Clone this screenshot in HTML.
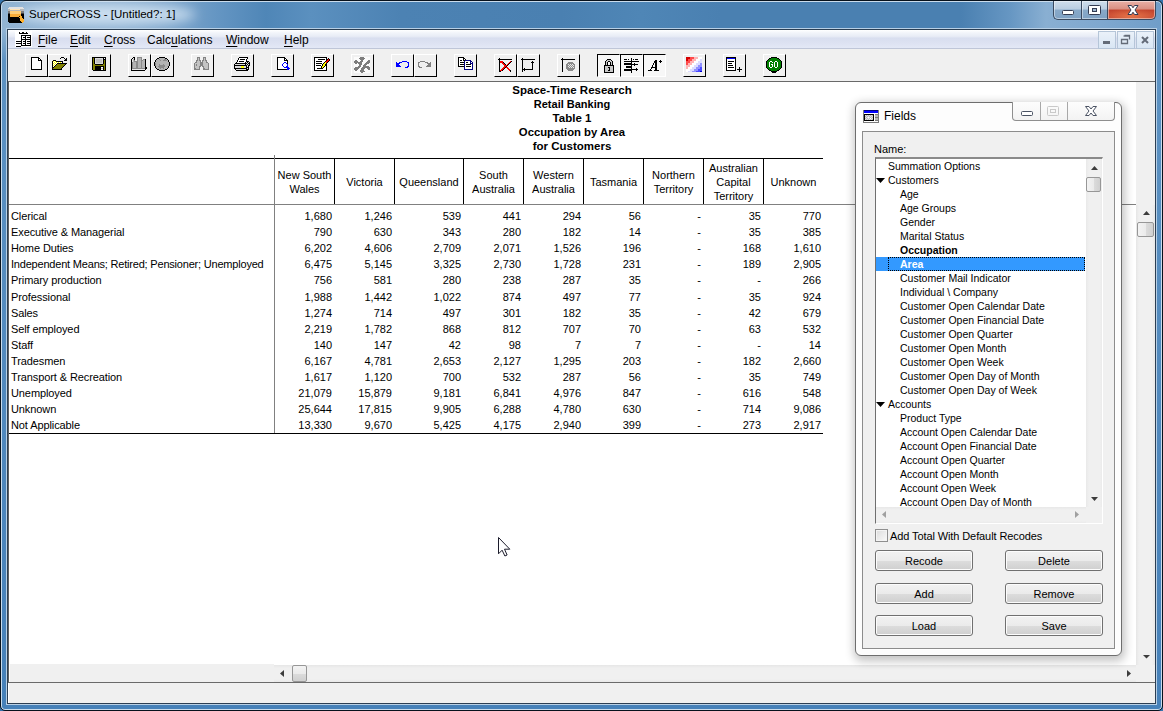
<!DOCTYPE html>
<html><head><meta charset="utf-8">
<style>
*{box-sizing:border-box}
html,body{margin:0;padding:0;width:1163px;height:711px;overflow:hidden;background:#3674ad}
body{position:relative;font-family:"Liberation Sans",sans-serif;font-size:11px;color:#000}
.a{position:absolute}
#frame{left:0;top:0;width:1163px;height:711px;border:1px solid #07111c;border-radius:6px 6px 5px 5px;
 background:linear-gradient(180deg,rgba(0,0,0,0) 0,rgba(0,0,0,0) 28px,#5d92c2 60px,#4681b9 700px),
 linear-gradient(90deg,#92b4d3 0px,#8aaed0 120px,#7ea6cc 170px,#6596c3 215px,#4f86b7 265px,#5b90bf 310px,#4c82b3 400px,#4a80b1 560px,#4f86b6 640px,#4a80b1 720px,#4a80b1 960px,#6797c3 1010px,#89afd2 1045px,#7fa8cf 1100px,#6f9dc8 1163px);
 box-shadow:inset 0 0 0 1px #cadcec}
#glow{left:18px;top:4px;width:178px;height:21px;border-radius:50%;background:rgba(214,230,244,0.85);filter:blur(6px)}
#title{left:29px;top:8px;font-size:11.5px;color:#000;white-space:nowrap}
#client{left:7px;top:29px;width:1149px;height:675px;border:1px solid #2b3e52;background:#f0f0f0;box-shadow:0 0 0 1px #b8d0e6}
#menubar{left:8px;top:30px;width:1147px;height:19px;border-bottom:1px solid #bfc6d8;background:linear-gradient(#ffffff 0,#f1f4fa 3px,#e9edf6 6px,#e4e8f4 7px,#d8deef 8px,#dde2f2 13px,#e3e8f6 18px);}
.mi{top:3px;font-size:12px;white-space:nowrap}
.mi u{text-decoration:underline;text-decoration-thickness:1px;text-underline-offset:2px}
#toolbar{left:8px;top:49px;width:1147px;height:33px;background:#f0f0f0;border-bottom:1px solid #696969}
.tb{position:absolute;top:54px;width:23px;height:23px;border-left:1px solid #fff;border-top:1px solid #fff;border-right:1px solid #000;border-bottom:1px solid #000;background:#f0f0f0}
.tb .ic{position:absolute;left:2px;top:2px}
.tb.pr{border-left-color:#000;border-top-color:#000;border-right-color:#fff;border-bottom-color:#fff;background:#f7f7f7}
.tb.pr .ic{left:3px;top:3px}
#mdi{left:8px;top:82px;width:1147px;height:583px;background:#fff}
.t{position:absolute;white-space:nowrap;font-size:11px;line-height:14px}
.b{font-weight:bold}
.tt{left:372px;width:400px;text-align:center;font-size:11.5px}
.hd{position:absolute;top:159px;height:45px;display:flex;align-items:center;justify-content:center;text-align:center;line-height:14px;font-size:11px}
.cb{top:1px;height:19px;border:1px solid #3a4a60;border-top:none;background:linear-gradient(#cfdeec 0,#b9cde1 45%,#88a9c9 50%,#7fa2c4 100%);box-shadow:inset 0 0 0 1px rgba(255,255,255,0.45)}
.mdib{top:31px;width:18px;height:18px;border:1px solid #b5c5d8;background:linear-gradient(#eaf1f9,#d9e6f4);}
.sb{background:#f0f0f0}
.thumbv{border:1px solid #979797;border-radius:2px;background:linear-gradient(90deg,#f3f3f3 0,#ebebeb 50%,#dcdcdc 51%,#d0d0d0 100%)}
.thumbh{border:1px solid #979797;border-radius:2px;background:linear-gradient(180deg,#f3f3f3 0,#ebebeb 50%,#dcdcdc 51%,#d0d0d0 100%)}
#fw{left:855px;top:102px;width:267px;height:554px;border:1px solid #6e6e6e;border-radius:6px;background:#fdfdfd;box-shadow:1px 3px 10px 2px rgba(0,0,0,0.24)}
.fbtn{position:absolute;width:98px;height:21px;border:1px solid #707070;border-radius:3px;background:linear-gradient(#f2f2f2 0,#ebebeb 50%,#dddddd 51%,#cfcfcf 100%);box-shadow:inset 0 0 0 1px #fcfcfc;font-size:11px;text-align:center;line-height:20px}
.li{position:absolute;left:0;height:14px;line-height:14px;font-size:10.5px;white-space:nowrap}
</style></head><body>
<div id="frame" class="a"></div>
<div id="glow" class="a"></div>
<svg class="a" style="left:8px;top:7px" width="16" height="16" viewBox="0 0 16 16" shape-rendering="crispEdges"><rect x="1" y="0" width="14" height="1" fill="#e2e2e2"/><rect x="0" y="1" width="16" height="1" fill="#e2e2e2"/><rect x="0" y="2" width="2" height="1" fill="#b8b8b8"/><rect x="2" y="2" width="10" height="1" fill="#ffe2b4"/><rect x="12" y="2" width="4" height="1" fill="#b8b8b8"/><rect x="0" y="3" width="16" height="1" fill="#b8b8b8"/><rect x="0" y="4" width="2" height="1" fill="#7c7c7c"/><rect x="2" y="4" width="11" height="1" fill="#ffcf7a"/><rect x="13" y="4" width="3" height="1" fill="#7c7c7c"/><rect x="0" y="5" width="2" height="1" fill="#7c7c7c"/><rect x="2" y="5" width="11" height="1" fill="#ffcf7a"/><rect x="13" y="5" width="3" height="1" fill="#7c7c7c"/><rect x="0" y="6" width="2" height="1" fill="#404040"/><rect x="2" y="6" width="11" height="1" fill="#ffcf7a"/><rect x="13" y="6" width="3" height="1" fill="#404040"/><rect x="0" y="7" width="2" height="1" fill="#000000"/><rect x="2" y="7" width="11" height="1" fill="#f9ad3a"/><rect x="13" y="7" width="3" height="1" fill="#000000"/><rect x="0" y="8" width="2" height="1" fill="#000000"/><rect x="2" y="8" width="9" height="1" fill="#f9ad3a"/><rect x="11" y="8" width="2" height="1" fill="#ffb22e"/><rect x="13" y="8" width="3" height="1" fill="#000000"/><rect x="0" y="9" width="2" height="1" fill="#000000"/><rect x="2" y="9" width="9" height="1" fill="#f9ad3a"/><rect x="11" y="9" width="1" height="1" fill="#000000"/><rect x="12" y="9" width="2" height="1" fill="#ffb22e"/><rect x="14" y="9" width="2" height="1" fill="#000000"/><rect x="0" y="10" width="11" height="1" fill="#000000"/><rect x="11" y="10" width="3" height="1" fill="#ffb22e"/><rect x="14" y="10" width="2" height="1" fill="#000000"/><rect x="0" y="11" width="12" height="1" fill="#000000"/><rect x="12" y="11" width="3" height="1" fill="#ffb22e"/><rect x="15" y="11" width="1" height="1" fill="#000000"/><rect x="0" y="12" width="12" height="1" fill="#000000"/><rect x="12" y="12" width="4" height="1" fill="#ffb22e"/><rect x="0" y="13" width="12" height="1" fill="#000000"/><rect x="12" y="13" width="4" height="1" fill="#ffb22e"/><rect x="0" y="14" width="13" height="1" fill="#000000"/><rect x="13" y="14" width="3" height="1" fill="#ffb22e"/><rect x="1" y="15" width="13" height="1" fill="#000000"/><rect x="14" y="15" width="1" height="1" fill="#ffb22e"/></svg>
<div class="a" id="title">SuperCROSS - [Untitled?: 1]</div>
<!-- caption buttons -->
<div class="a cb" style="left:1053px;width:29px;border-radius:0 0 0 5px;border-right:none"></div>
<div class="a cb" style="left:1081px;width:27px;border-right:none"></div>
<div class="a cb" style="left:1107px;width:49px;border-radius:0 0 5px 0;background:radial-gradient(ellipse 60% 45% at 50% 85%,rgba(255,150,90,0.55),rgba(255,150,90,0) 100%),linear-gradient(#e9b0a6 0,#d98f82 45%,#c2432c 50%,#c84a32 80%,#bf4a36 100%)"></div>
<svg class="a" style="left:1053px;top:0px" width="103" height="20" viewBox="0 0 103 20">
 <rect x="9.5" y="10.5" width="11" height="4" rx="1" fill="#fff" stroke="#343c52"/>
 <rect x="35.5" y="5.5" width="12" height="9" rx="1" fill="#fff" stroke="#343c52"/>
 <rect x="39.5" y="8.5" width="4" height="3" fill="#9fb7cf" stroke="#343c52"/>
 <path d="M75 5.5H78.5L80 7.8L81.5 5.5H85L82 10L85 14.5H81.5L80 12.2L78.5 14.5H75L78 10Z" fill="#fff" stroke="#343c52" stroke-linejoin="round"/>
</svg>
<div id="client" class="a"></div>
<div id="menubar" class="a">
 <div class="a mi" style="left:30px"><u>F</u>ile</div>
 <div class="a mi" style="left:62px"><u>E</u>dit</div>
 <div class="a mi" style="left:96px"><u>C</u>ross</div>
 <div class="a mi" style="left:139px">Calc<u>u</u>lations</div>
 <div class="a mi" style="left:218px"><u>W</u>indow</div>
 <div class="a mi" style="left:276px"><u>H</u>elp</div>
</div>
<div class="a" style="left:15px;top:31px;width:17px;height:16px;background:#fff"></div>
<svg class="a" style="left:16px;top:32px" width="16" height="16" viewBox="0 0 16 16" shape-rendering="crispEdges"><rect x="3" y="0" width="1" height="1" fill="#000000"/><rect x="6" y="0" width="2" height="1" fill="#000000"/><rect x="10" y="0" width="1" height="1" fill="#000000"/><rect x="3" y="1" width="9" height="1" fill="#000000"/><rect x="5" y="3" width="10" height="1" fill="#000000"/><rect x="5" y="4" width="1" height="1" fill="#000000"/><rect x="6" y="4" width="3" height="1" fill="#ffffff"/><rect x="9" y="4" width="1" height="1" fill="#000000"/><rect x="10" y="4" width="4" height="1" fill="#ffffff"/><rect x="14" y="4" width="1" height="1" fill="#000000"/><rect x="5" y="5" width="1" height="1" fill="#000000"/><rect x="6" y="5" width="1" height="1" fill="#ffffff"/><rect x="7" y="5" width="3" height="1" fill="#000000"/><rect x="10" y="5" width="1" height="1" fill="#ffffff"/><rect x="11" y="5" width="4" height="1" fill="#000000"/><rect x="5" y="6" width="1" height="1" fill="#000000"/><rect x="6" y="6" width="3" height="1" fill="#ffffff"/><rect x="9" y="6" width="1" height="1" fill="#000000"/><rect x="10" y="6" width="4" height="1" fill="#ffffff"/><rect x="14" y="6" width="1" height="1" fill="#000000"/><rect x="5" y="7" width="10" height="1" fill="#000000"/><rect x="5" y="8" width="1" height="1" fill="#000000"/><rect x="6" y="8" width="3" height="1" fill="#ffffff"/><rect x="9" y="8" width="1" height="1" fill="#000000"/><rect x="10" y="8" width="4" height="1" fill="#ffffff"/><rect x="14" y="8" width="1" height="1" fill="#000000"/><rect x="0" y="9" width="6" height="1" fill="#000000"/><rect x="6" y="9" width="1" height="1" fill="#ffffff"/><rect x="7" y="9" width="3" height="1" fill="#000000"/><rect x="10" y="9" width="1" height="1" fill="#ffffff"/><rect x="11" y="9" width="4" height="1" fill="#000000"/><rect x="5" y="10" width="1" height="1" fill="#000000"/><rect x="6" y="10" width="3" height="1" fill="#ffffff"/><rect x="9" y="10" width="1" height="1" fill="#000000"/><rect x="10" y="10" width="4" height="1" fill="#ffffff"/><rect x="14" y="10" width="1" height="1" fill="#000000"/><rect x="0" y="11" width="6" height="1" fill="#000000"/><rect x="6" y="11" width="1" height="1" fill="#ffffff"/><rect x="7" y="11" width="3" height="1" fill="#000000"/><rect x="10" y="11" width="1" height="1" fill="#ffffff"/><rect x="11" y="11" width="4" height="1" fill="#000000"/><rect x="5" y="12" width="1" height="1" fill="#000000"/><rect x="6" y="12" width="3" height="1" fill="#ffffff"/><rect x="9" y="12" width="1" height="1" fill="#000000"/><rect x="10" y="12" width="4" height="1" fill="#ffffff"/><rect x="14" y="12" width="1" height="1" fill="#000000"/><rect x="5" y="13" width="10" height="1" fill="#000000"/><rect x="0" y="14" width="5" height="1" fill="#000000"/></svg>
<div class="a mdib" style="left:1098px"></div>
<div class="a mdib" style="left:1117px"></div>
<div class="a mdib" style="left:1136px"></div>
<svg class="a" style="left:1098px;top:31px" width="57" height="18" viewBox="0 0 57 18">
 <rect x="5" y="10" width="7" height="3" fill="#636b78"/>
 <path d="M26.5 4.5H31.5V8.5M23.5 8.5H29.5V12.5H23.5Z" fill="none" stroke="#636b78" stroke-width="1.3"/>
 <path d="M25.5 5H31.5" stroke="#636b78" stroke-width="1.3"/>
 <path d="M44 6L50 12M50 6L44 12" stroke="#636b78" stroke-width="2"/>
</svg>
<div id="toolbar" class="a"></div>
<div id="mdi" class="a"></div>
<div class="tb" style="left:25px"></div>
<div class="tb" style="left:48px"></div>
<div class="tb" style="left:88px"></div>
<div class="tb" style="left:128px"></div>
<div class="tb" style="left:151px"></div>
<div class="tb" style="left:191px"></div>
<div class="tb" style="left:231px"></div>
<div class="tb" style="left:271px"></div>
<div class="tb" style="left:311px"></div>
<div class="tb" style="left:351px"></div>
<div class="tb" style="left:391px"></div>
<div class="tb" style="left:414px"></div>
<div class="tb" style="left:454px"></div>
<div class="tb" style="left:494px"></div>
<div class="tb" style="left:517px"></div>
<div class="tb" style="left:557px"></div>
<div class="tb pr" style="left:597px"></div>
<div class="tb pr" style="left:620px"></div>
<div class="tb pr" style="left:643px"></div>
<div class="tb" style="left:683px"></div>
<div class="tb" style="left:723px"></div>
<div class="tb" style="left:763px"></div>
<svg class="a" style="left:28px;top:57px" width="17" height="17" viewBox="0 0 17 17" shape-rendering="crispEdges"><rect x="3" y="0" width="8" height="1" fill="#000000"/><rect x="3" y="1" width="1" height="1" fill="#000000"/><rect x="4" y="1" width="6" height="1" fill="#ffffff"/><rect x="10" y="1" width="2" height="1" fill="#000000"/><rect x="3" y="2" width="1" height="1" fill="#000000"/><rect x="4" y="2" width="6" height="1" fill="#ffffff"/><rect x="10" y="2" width="1" height="1" fill="#000000"/><rect x="11" y="2" width="1" height="1" fill="#ffffff"/><rect x="12" y="2" width="1" height="1" fill="#000000"/><rect x="3" y="3" width="1" height="1" fill="#000000"/><rect x="4" y="3" width="6" height="1" fill="#ffffff"/><rect x="10" y="3" width="4" height="1" fill="#000000"/><rect x="3" y="4" width="1" height="1" fill="#000000"/><rect x="4" y="4" width="9" height="1" fill="#ffffff"/><rect x="13" y="4" width="1" height="1" fill="#000000"/><rect x="3" y="5" width="1" height="1" fill="#000000"/><rect x="4" y="5" width="9" height="1" fill="#ffffff"/><rect x="13" y="5" width="1" height="1" fill="#000000"/><rect x="3" y="6" width="1" height="1" fill="#000000"/><rect x="4" y="6" width="9" height="1" fill="#ffffff"/><rect x="13" y="6" width="1" height="1" fill="#000000"/><rect x="3" y="7" width="1" height="1" fill="#000000"/><rect x="4" y="7" width="9" height="1" fill="#ffffff"/><rect x="13" y="7" width="1" height="1" fill="#000000"/><rect x="3" y="8" width="1" height="1" fill="#000000"/><rect x="4" y="8" width="9" height="1" fill="#ffffff"/><rect x="13" y="8" width="1" height="1" fill="#000000"/><rect x="3" y="9" width="1" height="1" fill="#000000"/><rect x="4" y="9" width="9" height="1" fill="#ffffff"/><rect x="13" y="9" width="1" height="1" fill="#000000"/><rect x="3" y="10" width="1" height="1" fill="#000000"/><rect x="4" y="10" width="9" height="1" fill="#ffffff"/><rect x="13" y="10" width="1" height="1" fill="#000000"/><rect x="3" y="11" width="1" height="1" fill="#000000"/><rect x="4" y="11" width="9" height="1" fill="#ffffff"/><rect x="13" y="11" width="1" height="1" fill="#000000"/><rect x="3" y="12" width="11" height="1" fill="#000000"/></svg>
<svg class="a" style="left:51px;top:57px" width="17" height="17" viewBox="0 0 17 17" shape-rendering="crispEdges"><rect x="10" y="0" width="3" height="1" fill="#000000"/><rect x="9" y="1" width="1" height="1" fill="#000000"/><rect x="13" y="1" width="1" height="1" fill="#000000"/><rect x="15" y="1" width="1" height="1" fill="#000000"/><rect x="14" y="2" width="2" height="1" fill="#000000"/><rect x="2" y="3" width="3" height="1" fill="#000000"/><rect x="13" y="3" width="3" height="1" fill="#000000"/><rect x="1" y="4" width="1" height="1" fill="#000000"/><rect x="2" y="4" width="1" height="1" fill="#ffff00"/><rect x="3" y="4" width="1" height="1" fill="#ffffff"/><rect x="4" y="4" width="1" height="1" fill="#ffff00"/><rect x="5" y="4" width="7" height="1" fill="#000000"/><rect x="1" y="5" width="1" height="1" fill="#000000"/><rect x="2" y="5" width="1" height="1" fill="#ffffff"/><rect x="3" y="5" width="1" height="1" fill="#ffff00"/><rect x="4" y="5" width="1" height="1" fill="#ffffff"/><rect x="5" y="5" width="1" height="1" fill="#ffff00"/><rect x="6" y="5" width="1" height="1" fill="#ffffff"/><rect x="7" y="5" width="1" height="1" fill="#ffff00"/><rect x="8" y="5" width="1" height="1" fill="#ffffff"/><rect x="9" y="5" width="1" height="1" fill="#ffff00"/><rect x="10" y="5" width="1" height="1" fill="#ffffff"/><rect x="11" y="5" width="1" height="1" fill="#000000"/><rect x="1" y="6" width="1" height="1" fill="#000000"/><rect x="2" y="6" width="1" height="1" fill="#ffff00"/><rect x="3" y="6" width="1" height="1" fill="#ffffff"/><rect x="4" y="6" width="1" height="1" fill="#ffff00"/><rect x="5" y="6" width="1" height="1" fill="#ffffff"/><rect x="6" y="6" width="10" height="1" fill="#000000"/><rect x="1" y="7" width="1" height="1" fill="#000000"/><rect x="2" y="7" width="1" height="1" fill="#ffffff"/><rect x="3" y="7" width="1" height="1" fill="#ffff00"/><rect x="4" y="7" width="1" height="1" fill="#ffffff"/><rect x="5" y="7" width="1" height="1" fill="#000000"/><rect x="6" y="7" width="8" height="1" fill="#808000"/><rect x="14" y="7" width="1" height="1" fill="#000000"/><rect x="1" y="8" width="1" height="1" fill="#000000"/><rect x="2" y="8" width="1" height="1" fill="#ffff00"/><rect x="3" y="8" width="1" height="1" fill="#ffffff"/><rect x="4" y="8" width="1" height="1" fill="#000000"/><rect x="5" y="8" width="8" height="1" fill="#808000"/><rect x="13" y="8" width="1" height="1" fill="#000000"/><rect x="1" y="9" width="1" height="1" fill="#000000"/><rect x="2" y="9" width="1" height="1" fill="#ffffff"/><rect x="3" y="9" width="1" height="1" fill="#000000"/><rect x="4" y="9" width="8" height="1" fill="#808000"/><rect x="12" y="9" width="1" height="1" fill="#000000"/><rect x="1" y="10" width="2" height="1" fill="#000000"/><rect x="3" y="10" width="8" height="1" fill="#808000"/><rect x="11" y="10" width="1" height="1" fill="#000000"/><rect x="1" y="11" width="1" height="1" fill="#000000"/><rect x="2" y="11" width="8" height="1" fill="#808000"/><rect x="10" y="11" width="1" height="1" fill="#000000"/><rect x="1" y="12" width="10" height="1" fill="#000000"/></svg>
<svg class="a" style="left:91px;top:57px" width="17" height="17" viewBox="0 0 17 17" shape-rendering="crispEdges"><rect x="1" y="0" width="14" height="1" fill="#000000"/><rect x="1" y="1" width="1" height="1" fill="#000000"/><rect x="2" y="1" width="1" height="1" fill="#808000"/><rect x="3" y="1" width="1" height="1" fill="#000000"/><rect x="4" y="1" width="8" height="1" fill="#dcdcdc"/><rect x="12" y="1" width="1" height="1" fill="#000000"/><rect x="13" y="1" width="1" height="1" fill="#ffffff"/><rect x="14" y="1" width="1" height="1" fill="#000000"/><rect x="1" y="2" width="1" height="1" fill="#000000"/><rect x="2" y="2" width="1" height="1" fill="#808000"/><rect x="3" y="2" width="1" height="1" fill="#000000"/><rect x="4" y="2" width="1" height="1" fill="#dcdcdc"/><rect x="5" y="2" width="6" height="1" fill="#c0c0c0"/><rect x="11" y="2" width="1" height="1" fill="#dcdcdc"/><rect x="12" y="2" width="3" height="1" fill="#000000"/><rect x="1" y="3" width="1" height="1" fill="#000000"/><rect x="2" y="3" width="1" height="1" fill="#808000"/><rect x="3" y="3" width="1" height="1" fill="#000000"/><rect x="4" y="3" width="1" height="1" fill="#dcdcdc"/><rect x="5" y="3" width="6" height="1" fill="#c0c0c0"/><rect x="11" y="3" width="1" height="1" fill="#dcdcdc"/><rect x="12" y="3" width="1" height="1" fill="#000000"/><rect x="13" y="3" width="1" height="1" fill="#808000"/><rect x="14" y="3" width="1" height="1" fill="#000000"/><rect x="1" y="4" width="1" height="1" fill="#000000"/><rect x="2" y="4" width="1" height="1" fill="#808000"/><rect x="3" y="4" width="1" height="1" fill="#000000"/><rect x="4" y="4" width="1" height="1" fill="#dcdcdc"/><rect x="5" y="4" width="6" height="1" fill="#c0c0c0"/><rect x="11" y="4" width="1" height="1" fill="#dcdcdc"/><rect x="12" y="4" width="1" height="1" fill="#000000"/><rect x="13" y="4" width="1" height="1" fill="#808000"/><rect x="14" y="4" width="1" height="1" fill="#000000"/><rect x="1" y="5" width="1" height="1" fill="#000000"/><rect x="2" y="5" width="1" height="1" fill="#808000"/><rect x="3" y="5" width="1" height="1" fill="#000000"/><rect x="4" y="5" width="1" height="1" fill="#dcdcdc"/><rect x="5" y="5" width="6" height="1" fill="#c0c0c0"/><rect x="11" y="5" width="1" height="1" fill="#dcdcdc"/><rect x="12" y="5" width="1" height="1" fill="#000000"/><rect x="13" y="5" width="1" height="1" fill="#808000"/><rect x="14" y="5" width="1" height="1" fill="#000000"/><rect x="1" y="6" width="1" height="1" fill="#000000"/><rect x="2" y="6" width="1" height="1" fill="#808000"/><rect x="3" y="6" width="1" height="1" fill="#000000"/><rect x="4" y="6" width="8" height="1" fill="#dcdcdc"/><rect x="12" y="6" width="1" height="1" fill="#000000"/><rect x="13" y="6" width="1" height="1" fill="#808000"/><rect x="14" y="6" width="1" height="1" fill="#000000"/><rect x="1" y="7" width="1" height="1" fill="#000000"/><rect x="2" y="7" width="2" height="1" fill="#808000"/><rect x="4" y="7" width="8" height="1" fill="#000000"/><rect x="12" y="7" width="2" height="1" fill="#808000"/><rect x="14" y="7" width="1" height="1" fill="#000000"/><rect x="1" y="8" width="1" height="1" fill="#000000"/><rect x="2" y="8" width="12" height="1" fill="#808000"/><rect x="14" y="8" width="1" height="1" fill="#000000"/><rect x="1" y="9" width="1" height="1" fill="#000000"/><rect x="2" y="9" width="2" height="1" fill="#808000"/><rect x="4" y="9" width="9" height="1" fill="#000000"/><rect x="13" y="9" width="1" height="1" fill="#808000"/><rect x="14" y="9" width="1" height="1" fill="#000000"/><rect x="1" y="10" width="1" height="1" fill="#000000"/><rect x="2" y="10" width="2" height="1" fill="#808000"/><rect x="4" y="10" width="6" height="1" fill="#000000"/><rect x="10" y="10" width="2" height="1" fill="#ffffff"/><rect x="12" y="10" width="1" height="1" fill="#000000"/><rect x="13" y="10" width="1" height="1" fill="#808000"/><rect x="14" y="10" width="1" height="1" fill="#000000"/><rect x="1" y="11" width="1" height="1" fill="#000000"/><rect x="2" y="11" width="2" height="1" fill="#808000"/><rect x="4" y="11" width="6" height="1" fill="#000000"/><rect x="10" y="11" width="2" height="1" fill="#c0c0c0"/><rect x="12" y="11" width="1" height="1" fill="#000000"/><rect x="13" y="11" width="1" height="1" fill="#808000"/><rect x="14" y="11" width="1" height="1" fill="#000000"/><rect x="1" y="12" width="1" height="1" fill="#000000"/><rect x="2" y="12" width="2" height="1" fill="#808000"/><rect x="4" y="12" width="6" height="1" fill="#000000"/><rect x="10" y="12" width="2" height="1" fill="#ffffff"/><rect x="12" y="12" width="1" height="1" fill="#000000"/><rect x="13" y="12" width="1" height="1" fill="#808000"/><rect x="14" y="12" width="1" height="1" fill="#000000"/><rect x="2" y="13" width="13" height="1" fill="#000000"/></svg>
<svg class="a" style="left:131px;top:57px" width="17" height="17" viewBox="0 0 17 17" shape-rendering="crispEdges"><rect x="2" y="0" width="2" height="1" fill="#000000"/><rect x="6" y="0" width="5" height="1" fill="#8a8a8a"/><rect x="1" y="1" width="1" height="1" fill="#000000"/><rect x="2" y="1" width="1" height="1" fill="#e8e8e8"/><rect x="3" y="1" width="1" height="1" fill="#000000"/><rect x="6" y="1" width="1" height="1" fill="#8a8a8a"/><rect x="7" y="1" width="3" height="1" fill="#b4b4b4"/><rect x="10" y="1" width="1" height="1" fill="#8a8a8a"/><rect x="0" y="2" width="1" height="1" fill="#000000"/><rect x="1" y="2" width="1" height="1" fill="#e8e8e8"/><rect x="2" y="2" width="1" height="1" fill="#b4b4b4"/><rect x="3" y="2" width="1" height="1" fill="#000000"/><rect x="6" y="2" width="1" height="1" fill="#8a8a8a"/><rect x="7" y="2" width="3" height="1" fill="#b4b4b4"/><rect x="10" y="2" width="1" height="1" fill="#8a8a8a"/><rect x="12" y="2" width="2" height="1" fill="#8a8a8a"/><rect x="14" y="2" width="1" height="1" fill="#000000"/><rect x="0" y="3" width="1" height="1" fill="#000000"/><rect x="1" y="3" width="1" height="1" fill="#e8e8e8"/><rect x="2" y="3" width="1" height="1" fill="#b4b4b4"/><rect x="3" y="3" width="1" height="1" fill="#8a8a8a"/><rect x="6" y="3" width="1" height="1" fill="#8a8a8a"/><rect x="7" y="3" width="3" height="1" fill="#b4b4b4"/><rect x="10" y="3" width="2" height="1" fill="#8a8a8a"/><rect x="12" y="3" width="2" height="1" fill="#b4b4b4"/><rect x="14" y="3" width="1" height="1" fill="#000000"/><rect x="0" y="4" width="1" height="1" fill="#000000"/><rect x="1" y="4" width="1" height="1" fill="#e8e8e8"/><rect x="2" y="4" width="1" height="1" fill="#b4b4b4"/><rect x="3" y="4" width="4" height="1" fill="#8a8a8a"/><rect x="7" y="4" width="3" height="1" fill="#b4b4b4"/><rect x="10" y="4" width="1" height="1" fill="#8a8a8a"/><rect x="11" y="4" width="3" height="1" fill="#b4b4b4"/><rect x="14" y="4" width="1" height="1" fill="#000000"/><rect x="0" y="5" width="1" height="1" fill="#000000"/><rect x="1" y="5" width="1" height="1" fill="#8a8a8a"/><rect x="2" y="5" width="3" height="1" fill="#b4b4b4"/><rect x="5" y="5" width="2" height="1" fill="#8a8a8a"/><rect x="7" y="5" width="3" height="1" fill="#b4b4b4"/><rect x="10" y="5" width="1" height="1" fill="#8a8a8a"/><rect x="11" y="5" width="3" height="1" fill="#b4b4b4"/><rect x="14" y="5" width="1" height="1" fill="#000000"/><rect x="0" y="6" width="1" height="1" fill="#000000"/><rect x="1" y="6" width="1" height="1" fill="#8a8a8a"/><rect x="2" y="6" width="3" height="1" fill="#b4b4b4"/><rect x="5" y="6" width="2" height="1" fill="#8a8a8a"/><rect x="7" y="6" width="3" height="1" fill="#b4b4b4"/><rect x="10" y="6" width="1" height="1" fill="#8a8a8a"/><rect x="11" y="6" width="3" height="1" fill="#b4b4b4"/><rect x="14" y="6" width="1" height="1" fill="#000000"/><rect x="0" y="7" width="1" height="1" fill="#000000"/><rect x="1" y="7" width="1" height="1" fill="#8a8a8a"/><rect x="2" y="7" width="3" height="1" fill="#b4b4b4"/><rect x="5" y="7" width="2" height="1" fill="#8a8a8a"/><rect x="7" y="7" width="3" height="1" fill="#b4b4b4"/><rect x="10" y="7" width="1" height="1" fill="#8a8a8a"/><rect x="11" y="7" width="3" height="1" fill="#b4b4b4"/><rect x="14" y="7" width="1" height="1" fill="#000000"/><rect x="0" y="8" width="1" height="1" fill="#000000"/><rect x="1" y="8" width="1" height="1" fill="#8a8a8a"/><rect x="2" y="8" width="3" height="1" fill="#b4b4b4"/><rect x="5" y="8" width="2" height="1" fill="#8a8a8a"/><rect x="7" y="8" width="3" height="1" fill="#b4b4b4"/><rect x="10" y="8" width="1" height="1" fill="#8a8a8a"/><rect x="11" y="8" width="3" height="1" fill="#b4b4b4"/><rect x="14" y="8" width="1" height="1" fill="#000000"/><rect x="0" y="9" width="1" height="1" fill="#000000"/><rect x="1" y="9" width="1" height="1" fill="#8a8a8a"/><rect x="2" y="9" width="3" height="1" fill="#b4b4b4"/><rect x="5" y="9" width="2" height="1" fill="#8a8a8a"/><rect x="7" y="9" width="3" height="1" fill="#b4b4b4"/><rect x="10" y="9" width="1" height="1" fill="#8a8a8a"/><rect x="11" y="9" width="3" height="1" fill="#b4b4b4"/><rect x="14" y="9" width="1" height="1" fill="#000000"/><rect x="0" y="10" width="1" height="1" fill="#000000"/><rect x="1" y="10" width="1" height="1" fill="#8a8a8a"/><rect x="2" y="10" width="3" height="1" fill="#b4b4b4"/><rect x="5" y="10" width="2" height="1" fill="#8a8a8a"/><rect x="7" y="10" width="3" height="1" fill="#b4b4b4"/><rect x="10" y="10" width="1" height="1" fill="#8a8a8a"/><rect x="11" y="10" width="3" height="1" fill="#b4b4b4"/><rect x="14" y="10" width="2" height="1" fill="#000000"/><rect x="0" y="11" width="1" height="1" fill="#000000"/><rect x="1" y="11" width="13" height="1" fill="#8a8a8a"/><rect x="14" y="11" width="2" height="1" fill="#000000"/><rect x="0" y="12" width="1" height="1" fill="#000000"/><rect x="1" y="12" width="13" height="1" fill="#e8e8e8"/><rect x="14" y="12" width="1" height="1" fill="#000000"/><rect x="0" y="13" width="14" height="1" fill="#000000"/></svg>
<svg class="a" style="left:154px;top:57px" width="17" height="17" viewBox="0 0 17 17" shape-rendering="crispEdges"><rect x="5" y="0" width="6" height="1" fill="#000000"/><rect x="3" y="1" width="2" height="1" fill="#000000"/><rect x="5" y="1" width="6" height="1" fill="#b4b4b4"/><rect x="11" y="1" width="2" height="1" fill="#000000"/><rect x="2" y="2" width="1" height="1" fill="#000000"/><rect x="3" y="2" width="2" height="1" fill="#b4b4b4"/><rect x="5" y="2" width="1" height="1" fill="#8a8a8a"/><rect x="6" y="2" width="4" height="1" fill="#b4b4b4"/><rect x="10" y="2" width="2" height="1" fill="#8a8a8a"/><rect x="12" y="2" width="1" height="1" fill="#b4b4b4"/><rect x="13" y="2" width="1" height="1" fill="#000000"/><rect x="1" y="3" width="1" height="1" fill="#000000"/><rect x="2" y="3" width="4" height="1" fill="#b4b4b4"/><rect x="6" y="3" width="1" height="1" fill="#8a8a8a"/><rect x="7" y="3" width="2" height="1" fill="#b4b4b4"/><rect x="9" y="3" width="4" height="1" fill="#8a8a8a"/><rect x="13" y="3" width="1" height="1" fill="#b4b4b4"/><rect x="14" y="3" width="1" height="1" fill="#000000"/><rect x="1" y="4" width="1" height="1" fill="#000000"/><rect x="2" y="4" width="12" height="1" fill="#b4b4b4"/><rect x="14" y="4" width="1" height="1" fill="#000000"/><rect x="0" y="5" width="1" height="1" fill="#000000"/><rect x="1" y="5" width="14" height="1" fill="#b4b4b4"/><rect x="15" y="5" width="1" height="1" fill="#000000"/><rect x="0" y="6" width="1" height="1" fill="#000000"/><rect x="1" y="6" width="1" height="1" fill="#8a8a8a"/><rect x="2" y="6" width="13" height="1" fill="#b4b4b4"/><rect x="15" y="6" width="1" height="1" fill="#000000"/><rect x="0" y="7" width="1" height="1" fill="#000000"/><rect x="1" y="7" width="1" height="1" fill="#8a8a8a"/><rect x="2" y="7" width="3" height="1" fill="#b4b4b4"/><rect x="5" y="7" width="1" height="1" fill="#8a8a8a"/><rect x="6" y="7" width="3" height="1" fill="#b4b4b4"/><rect x="9" y="7" width="1" height="1" fill="#8a8a8a"/><rect x="10" y="7" width="5" height="1" fill="#b4b4b4"/><rect x="15" y="7" width="1" height="1" fill="#000000"/><rect x="0" y="8" width="1" height="1" fill="#000000"/><rect x="1" y="8" width="1" height="1" fill="#8a8a8a"/><rect x="2" y="8" width="3" height="1" fill="#b4b4b4"/><rect x="5" y="8" width="6" height="1" fill="#8a8a8a"/><rect x="11" y="8" width="4" height="1" fill="#b4b4b4"/><rect x="15" y="8" width="1" height="1" fill="#000000"/><rect x="1" y="9" width="1" height="1" fill="#000000"/><rect x="2" y="9" width="2" height="1" fill="#b4b4b4"/><rect x="4" y="9" width="7" height="1" fill="#8a8a8a"/><rect x="11" y="9" width="3" height="1" fill="#b4b4b4"/><rect x="14" y="9" width="1" height="1" fill="#000000"/><rect x="1" y="10" width="1" height="1" fill="#000000"/><rect x="2" y="10" width="3" height="1" fill="#b4b4b4"/><rect x="5" y="10" width="5" height="1" fill="#8a8a8a"/><rect x="10" y="10" width="4" height="1" fill="#b4b4b4"/><rect x="14" y="10" width="1" height="1" fill="#000000"/><rect x="2" y="11" width="1" height="1" fill="#000000"/><rect x="3" y="11" width="3" height="1" fill="#b4b4b4"/><rect x="6" y="11" width="1" height="1" fill="#8a8a8a"/><rect x="7" y="11" width="2" height="1" fill="#b4b4b4"/><rect x="9" y="11" width="1" height="1" fill="#8a8a8a"/><rect x="10" y="11" width="3" height="1" fill="#b4b4b4"/><rect x="13" y="11" width="1" height="1" fill="#000000"/><rect x="3" y="12" width="2" height="1" fill="#000000"/><rect x="5" y="12" width="6" height="1" fill="#b4b4b4"/><rect x="11" y="12" width="2" height="1" fill="#000000"/><rect x="5" y="13" width="6" height="1" fill="#000000"/></svg>
<svg class="a" style="left:194px;top:57px" width="17" height="17" viewBox="0 0 17 17" shape-rendering="crispEdges"><rect x="3" y="0" width="3" height="1" fill="#848484"/><rect x="9" y="0" width="3" height="1" fill="#848484"/><rect x="3" y="1" width="1" height="1" fill="#848484"/><rect x="4" y="1" width="1" height="1" fill="#c4c4c4"/><rect x="5" y="1" width="1" height="1" fill="#848484"/><rect x="9" y="1" width="1" height="1" fill="#848484"/><rect x="10" y="1" width="1" height="1" fill="#c4c4c4"/><rect x="11" y="1" width="1" height="1" fill="#848484"/><rect x="3" y="2" width="1" height="1" fill="#848484"/><rect x="4" y="2" width="1" height="1" fill="#c4c4c4"/><rect x="5" y="2" width="1" height="1" fill="#848484"/><rect x="9" y="2" width="1" height="1" fill="#848484"/><rect x="10" y="2" width="1" height="1" fill="#c4c4c4"/><rect x="11" y="2" width="1" height="1" fill="#848484"/><rect x="2" y="3" width="2" height="1" fill="#848484"/><rect x="4" y="3" width="1" height="1" fill="#c4c4c4"/><rect x="5" y="3" width="2" height="1" fill="#848484"/><rect x="8" y="3" width="2" height="1" fill="#848484"/><rect x="10" y="3" width="1" height="1" fill="#c4c4c4"/><rect x="11" y="3" width="2" height="1" fill="#848484"/><rect x="2" y="4" width="1" height="1" fill="#848484"/><rect x="3" y="4" width="3" height="1" fill="#c4c4c4"/><rect x="6" y="4" width="1" height="1" fill="#848484"/><rect x="8" y="4" width="1" height="1" fill="#848484"/><rect x="9" y="4" width="3" height="1" fill="#c4c4c4"/><rect x="12" y="4" width="1" height="1" fill="#848484"/><rect x="1" y="5" width="2" height="1" fill="#848484"/><rect x="3" y="5" width="3" height="1" fill="#c4c4c4"/><rect x="6" y="5" width="3" height="1" fill="#848484"/><rect x="9" y="5" width="3" height="1" fill="#c4c4c4"/><rect x="12" y="5" width="2" height="1" fill="#848484"/><rect x="0" y="6" width="1" height="1" fill="#848484"/><rect x="1" y="6" width="5" height="1" fill="#c4c4c4"/><rect x="6" y="6" width="3" height="1" fill="#848484"/><rect x="9" y="6" width="5" height="1" fill="#c4c4c4"/><rect x="14" y="6" width="1" height="1" fill="#848484"/><rect x="0" y="7" width="1" height="1" fill="#848484"/><rect x="1" y="7" width="1" height="1" fill="#c4c4c4"/><rect x="2" y="7" width="1" height="1" fill="#848484"/><rect x="3" y="7" width="3" height="1" fill="#c4c4c4"/><rect x="6" y="7" width="3" height="1" fill="#848484"/><rect x="9" y="7" width="5" height="1" fill="#c4c4c4"/><rect x="14" y="7" width="1" height="1" fill="#848484"/><rect x="0" y="8" width="1" height="1" fill="#848484"/><rect x="1" y="8" width="1" height="1" fill="#c4c4c4"/><rect x="2" y="8" width="1" height="1" fill="#848484"/><rect x="3" y="8" width="3" height="1" fill="#c4c4c4"/><rect x="6" y="8" width="3" height="1" fill="#848484"/><rect x="9" y="8" width="5" height="1" fill="#c4c4c4"/><rect x="14" y="8" width="1" height="1" fill="#848484"/><rect x="0" y="9" width="1" height="1" fill="#848484"/><rect x="1" y="9" width="4" height="1" fill="#c4c4c4"/><rect x="5" y="9" width="2" height="1" fill="#848484"/><rect x="8" y="9" width="2" height="1" fill="#848484"/><rect x="10" y="9" width="4" height="1" fill="#c4c4c4"/><rect x="14" y="9" width="1" height="1" fill="#848484"/><rect x="0" y="10" width="1" height="1" fill="#848484"/><rect x="1" y="10" width="4" height="1" fill="#c4c4c4"/><rect x="5" y="10" width="1" height="1" fill="#848484"/><rect x="9" y="10" width="1" height="1" fill="#848484"/><rect x="10" y="10" width="4" height="1" fill="#c4c4c4"/><rect x="14" y="10" width="1" height="1" fill="#848484"/><rect x="0" y="11" width="2" height="1" fill="#848484"/><rect x="2" y="11" width="3" height="1" fill="#c4c4c4"/><rect x="5" y="11" width="1" height="1" fill="#848484"/><rect x="9" y="11" width="2" height="1" fill="#848484"/><rect x="11" y="11" width="3" height="1" fill="#c4c4c4"/><rect x="14" y="11" width="1" height="1" fill="#848484"/><rect x="0" y="12" width="6" height="1" fill="#848484"/><rect x="9" y="12" width="6" height="1" fill="#848484"/></svg>
<svg class="a" style="left:234px;top:57px" width="17" height="17" viewBox="0 0 17 17" shape-rendering="crispEdges"><rect x="5" y="0" width="9" height="1" fill="#000000"/><rect x="4" y="1" width="1" height="1" fill="#000000"/><rect x="5" y="1" width="8" height="1" fill="#ffffff"/><rect x="13" y="1" width="1" height="1" fill="#000000"/><rect x="4" y="2" width="1" height="1" fill="#000000"/><rect x="5" y="2" width="1" height="1" fill="#ffffff"/><rect x="6" y="2" width="5" height="1" fill="#000000"/><rect x="11" y="2" width="1" height="1" fill="#ffffff"/><rect x="12" y="2" width="1" height="1" fill="#000000"/><rect x="3" y="3" width="1" height="1" fill="#000000"/><rect x="4" y="3" width="8" height="1" fill="#ffffff"/><rect x="12" y="3" width="1" height="1" fill="#000000"/><rect x="3" y="4" width="1" height="1" fill="#000000"/><rect x="4" y="4" width="1" height="1" fill="#ffffff"/><rect x="5" y="4" width="5" height="1" fill="#000000"/><rect x="10" y="4" width="2" height="1" fill="#ffffff"/><rect x="12" y="4" width="3" height="1" fill="#000000"/><rect x="2" y="5" width="1" height="1" fill="#000000"/><rect x="3" y="5" width="8" height="1" fill="#ffffff"/><rect x="11" y="5" width="1" height="1" fill="#000000"/><rect x="12" y="5" width="1" height="1" fill="#dcdcdc"/><rect x="13" y="5" width="1" height="1" fill="#000000"/><rect x="14" y="5" width="1" height="1" fill="#dcdcdc"/><rect x="15" y="5" width="1" height="1" fill="#000000"/><rect x="1" y="6" width="12" height="1" fill="#000000"/><rect x="13" y="6" width="1" height="1" fill="#dcdcdc"/><rect x="14" y="6" width="2" height="1" fill="#000000"/><rect x="0" y="7" width="1" height="1" fill="#000000"/><rect x="1" y="7" width="10" height="1" fill="#dcdcdc"/><rect x="11" y="7" width="1" height="1" fill="#000000"/><rect x="12" y="7" width="1" height="1" fill="#dcdcdc"/><rect x="13" y="7" width="1" height="1" fill="#000000"/><rect x="14" y="7" width="1" height="1" fill="#dcdcdc"/><rect x="15" y="7" width="1" height="1" fill="#000000"/><rect x="0" y="8" width="13" height="1" fill="#000000"/><rect x="13" y="8" width="1" height="1" fill="#dcdcdc"/><rect x="14" y="8" width="2" height="1" fill="#000000"/><rect x="0" y="9" width="1" height="1" fill="#000000"/><rect x="1" y="9" width="6" height="1" fill="#dcdcdc"/><rect x="7" y="9" width="3" height="1" fill="#ffff00"/><rect x="10" y="9" width="2" height="1" fill="#dcdcdc"/><rect x="12" y="9" width="1" height="1" fill="#000000"/><rect x="13" y="9" width="1" height="1" fill="#dcdcdc"/><rect x="14" y="9" width="1" height="1" fill="#000000"/><rect x="0" y="10" width="1" height="1" fill="#000000"/><rect x="1" y="10" width="6" height="1" fill="#dcdcdc"/><rect x="7" y="10" width="3" height="1" fill="#ffff00"/><rect x="10" y="10" width="2" height="1" fill="#dcdcdc"/><rect x="12" y="10" width="3" height="1" fill="#000000"/><rect x="0" y="11" width="13" height="1" fill="#000000"/><rect x="13" y="11" width="1" height="1" fill="#dcdcdc"/><rect x="14" y="11" width="1" height="1" fill="#000000"/><rect x="1" y="12" width="1" height="1" fill="#000000"/><rect x="2" y="12" width="10" height="1" fill="#dcdcdc"/><rect x="12" y="12" width="3" height="1" fill="#000000"/><rect x="2" y="13" width="12" height="1" fill="#000000"/></svg>
<svg class="a" style="left:274px;top:57px" width="17" height="17" viewBox="0 0 17 17" shape-rendering="crispEdges"><rect x="3" y="0" width="8" height="1" fill="#000000"/><rect x="3" y="1" width="1" height="1" fill="#000000"/><rect x="4" y="1" width="6" height="1" fill="#ffffff"/><rect x="10" y="1" width="2" height="1" fill="#000000"/><rect x="3" y="2" width="1" height="1" fill="#000000"/><rect x="4" y="2" width="6" height="1" fill="#ffffff"/><rect x="10" y="2" width="1" height="1" fill="#000000"/><rect x="11" y="2" width="1" height="1" fill="#ffffff"/><rect x="12" y="2" width="1" height="1" fill="#000000"/><rect x="3" y="3" width="1" height="1" fill="#000000"/><rect x="4" y="3" width="6" height="1" fill="#ffffff"/><rect x="10" y="3" width="4" height="1" fill="#000000"/><rect x="3" y="4" width="1" height="1" fill="#000000"/><rect x="4" y="4" width="9" height="1" fill="#ffffff"/><rect x="13" y="4" width="1" height="1" fill="#000000"/><rect x="3" y="5" width="1" height="1" fill="#000000"/><rect x="4" y="5" width="6" height="1" fill="#ffffff"/><rect x="10" y="5" width="2" height="1" fill="#0000ff"/><rect x="12" y="5" width="1" height="1" fill="#ffffff"/><rect x="13" y="5" width="1" height="1" fill="#000000"/><rect x="3" y="6" width="1" height="1" fill="#000000"/><rect x="4" y="6" width="5" height="1" fill="#ffffff"/><rect x="9" y="6" width="1" height="1" fill="#0000ff"/><rect x="10" y="6" width="2" height="1" fill="#ffffff"/><rect x="12" y="6" width="1" height="1" fill="#0000ff"/><rect x="13" y="6" width="1" height="1" fill="#000000"/><rect x="3" y="7" width="1" height="1" fill="#000000"/><rect x="4" y="7" width="4" height="1" fill="#ffffff"/><rect x="8" y="7" width="1" height="1" fill="#0000ff"/><rect x="9" y="7" width="4" height="1" fill="#ffffff"/><rect x="13" y="7" width="1" height="1" fill="#0000ff"/><rect x="3" y="8" width="1" height="1" fill="#000000"/><rect x="4" y="8" width="4" height="1" fill="#ffffff"/><rect x="8" y="8" width="1" height="1" fill="#0000ff"/><rect x="9" y="8" width="4" height="1" fill="#ffffff"/><rect x="13" y="8" width="1" height="1" fill="#0000ff"/><rect x="3" y="9" width="1" height="1" fill="#000000"/><rect x="4" y="9" width="5" height="1" fill="#ffffff"/><rect x="9" y="9" width="1" height="1" fill="#0000ff"/><rect x="10" y="9" width="2" height="1" fill="#ffffff"/><rect x="12" y="9" width="2" height="1" fill="#0000ff"/><rect x="3" y="10" width="1" height="1" fill="#000000"/><rect x="4" y="10" width="6" height="1" fill="#ffffff"/><rect x="10" y="10" width="5" height="1" fill="#0000ff"/><rect x="3" y="11" width="1" height="1" fill="#000000"/><rect x="4" y="11" width="9" height="1" fill="#ffffff"/><rect x="13" y="11" width="3" height="1" fill="#0000ff"/><rect x="3" y="12" width="10" height="1" fill="#000000"/><rect x="13" y="12" width="2" height="1" fill="#0000ff"/></svg>
<svg class="a" style="left:314px;top:57px" width="17" height="17" viewBox="0 0 17 17" shape-rendering="crispEdges"><rect x="0" y="0" width="13" height="1" fill="#000000"/><rect x="0" y="1" width="1" height="1" fill="#000000"/><rect x="1" y="1" width="11" height="1" fill="#ffffff"/><rect x="12" y="1" width="1" height="1" fill="#000000"/><rect x="14" y="1" width="1" height="1" fill="#000000"/><rect x="0" y="2" width="1" height="1" fill="#000000"/><rect x="1" y="2" width="3" height="1" fill="#ffffff"/><rect x="4" y="2" width="7" height="1" fill="#000000"/><rect x="11" y="2" width="1" height="1" fill="#ffffff"/><rect x="12" y="2" width="2" height="1" fill="#000000"/><rect x="14" y="2" width="1" height="1" fill="#ff0000"/><rect x="15" y="2" width="1" height="1" fill="#000000"/><rect x="0" y="3" width="1" height="1" fill="#000000"/><rect x="1" y="3" width="11" height="1" fill="#ffffff"/><rect x="12" y="3" width="1" height="1" fill="#000000"/><rect x="13" y="3" width="2" height="1" fill="#ff0000"/><rect x="15" y="3" width="1" height="1" fill="#000000"/><rect x="0" y="4" width="1" height="1" fill="#000000"/><rect x="1" y="4" width="1" height="1" fill="#ffffff"/><rect x="2" y="4" width="6" height="1" fill="#000000"/><rect x="8" y="4" width="3" height="1" fill="#ffffff"/><rect x="11" y="4" width="1" height="1" fill="#000000"/><rect x="12" y="4" width="2" height="1" fill="#ff0000"/><rect x="14" y="4" width="1" height="1" fill="#000000"/><rect x="0" y="5" width="1" height="1" fill="#000000"/><rect x="1" y="5" width="9" height="1" fill="#ffffff"/><rect x="10" y="5" width="1" height="1" fill="#000000"/><rect x="11" y="5" width="1" height="1" fill="#ffff00"/><rect x="12" y="5" width="1" height="1" fill="#ff0000"/><rect x="13" y="5" width="1" height="1" fill="#000000"/><rect x="0" y="6" width="1" height="1" fill="#000000"/><rect x="1" y="6" width="1" height="1" fill="#ffffff"/><rect x="2" y="6" width="6" height="1" fill="#000000"/><rect x="8" y="6" width="1" height="1" fill="#ffffff"/><rect x="9" y="6" width="1" height="1" fill="#000000"/><rect x="10" y="6" width="2" height="1" fill="#ffff00"/><rect x="12" y="6" width="1" height="1" fill="#000000"/><rect x="0" y="7" width="1" height="1" fill="#000000"/><rect x="1" y="7" width="7" height="1" fill="#ffffff"/><rect x="8" y="7" width="1" height="1" fill="#000000"/><rect x="9" y="7" width="2" height="1" fill="#ffff00"/><rect x="11" y="7" width="2" height="1" fill="#000000"/><rect x="0" y="8" width="1" height="1" fill="#000000"/><rect x="1" y="8" width="1" height="1" fill="#ffffff"/><rect x="2" y="8" width="5" height="1" fill="#000000"/><rect x="7" y="8" width="1" height="1" fill="#ffffff"/><rect x="8" y="8" width="1" height="1" fill="#000000"/><rect x="9" y="8" width="2" height="1" fill="#ffff00"/><rect x="11" y="8" width="2" height="1" fill="#000000"/><rect x="0" y="9" width="1" height="1" fill="#000000"/><rect x="1" y="9" width="6" height="1" fill="#ffffff"/><rect x="7" y="9" width="1" height="1" fill="#000000"/><rect x="8" y="9" width="2" height="1" fill="#ffff00"/><rect x="10" y="9" width="1" height="1" fill="#000000"/><rect x="11" y="9" width="1" height="1" fill="#ffffff"/><rect x="12" y="9" width="1" height="1" fill="#000000"/><rect x="0" y="10" width="1" height="1" fill="#000000"/><rect x="1" y="10" width="6" height="1" fill="#ffffff"/><rect x="7" y="10" width="1" height="1" fill="#000000"/><rect x="8" y="10" width="1" height="1" fill="#ffff00"/><rect x="9" y="10" width="1" height="1" fill="#000000"/><rect x="10" y="10" width="2" height="1" fill="#ffffff"/><rect x="12" y="10" width="1" height="1" fill="#000000"/><rect x="0" y="11" width="1" height="1" fill="#000000"/><rect x="1" y="11" width="2" height="1" fill="#ffffff"/><rect x="3" y="11" width="6" height="1" fill="#000000"/><rect x="9" y="11" width="3" height="1" fill="#ffffff"/><rect x="12" y="11" width="1" height="1" fill="#000000"/><rect x="0" y="12" width="1" height="1" fill="#000000"/><rect x="1" y="12" width="11" height="1" fill="#ffffff"/><rect x="12" y="12" width="1" height="1" fill="#000000"/><rect x="0" y="13" width="13" height="1" fill="#000000"/></svg>
<svg class="a" style="left:354px;top:57px" width="17" height="17" viewBox="0 0 17 17" shape-rendering="crispEdges"><rect x="0" y="0" width="6" height="1" fill="#fbfbfb"/><rect x="6" y="0" width="4" height="1" fill="#7d7d7d"/><rect x="10" y="0" width="6" height="1" fill="#fbfbfb"/><rect x="0" y="1" width="5" height="1" fill="#fbfbfb"/><rect x="5" y="1" width="6" height="1" fill="#7d7d7d"/><rect x="11" y="1" width="5" height="1" fill="#fbfbfb"/><rect x="0" y="2" width="6" height="1" fill="#fbfbfb"/><rect x="6" y="2" width="4" height="1" fill="#7d7d7d"/><rect x="10" y="2" width="6" height="1" fill="#fbfbfb"/><rect x="0" y="3" width="1" height="1" fill="#fbfbfb"/><rect x="1" y="3" width="2" height="1" fill="#7d7d7d"/><rect x="3" y="3" width="4" height="1" fill="#fbfbfb"/><rect x="7" y="3" width="2" height="1" fill="#7d7d7d"/><rect x="9" y="3" width="5" height="1" fill="#fbfbfb"/><rect x="14" y="3" width="2" height="1" fill="#7d7d7d"/><rect x="0" y="4" width="4" height="1" fill="#7d7d7d"/><rect x="4" y="4" width="2" height="1" fill="#fbfbfb"/><rect x="6" y="4" width="3" height="1" fill="#7d7d7d"/><rect x="9" y="4" width="4" height="1" fill="#fbfbfb"/><rect x="13" y="4" width="3" height="1" fill="#7d7d7d"/><rect x="0" y="5" width="8" height="1" fill="#7d7d7d"/><rect x="8" y="5" width="4" height="1" fill="#fbfbfb"/><rect x="12" y="5" width="4" height="1" fill="#7d7d7d"/><rect x="0" y="6" width="1" height="1" fill="#fbfbfb"/><rect x="1" y="6" width="2" height="1" fill="#7d7d7d"/><rect x="3" y="6" width="1" height="1" fill="#fbfbfb"/><rect x="4" y="6" width="4" height="1" fill="#7d7d7d"/><rect x="8" y="6" width="3" height="1" fill="#fbfbfb"/><rect x="11" y="6" width="4" height="1" fill="#7d7d7d"/><rect x="15" y="6" width="1" height="1" fill="#fbfbfb"/><rect x="0" y="7" width="5" height="1" fill="#fbfbfb"/><rect x="5" y="7" width="3" height="1" fill="#7d7d7d"/><rect x="8" y="7" width="2" height="1" fill="#fbfbfb"/><rect x="10" y="7" width="3" height="1" fill="#7d7d7d"/><rect x="13" y="7" width="3" height="1" fill="#fbfbfb"/><rect x="0" y="8" width="5" height="1" fill="#fbfbfb"/><rect x="5" y="8" width="2" height="1" fill="#7d7d7d"/><rect x="7" y="8" width="2" height="1" fill="#fbfbfb"/><rect x="9" y="8" width="3" height="1" fill="#7d7d7d"/><rect x="12" y="8" width="4" height="1" fill="#fbfbfb"/><rect x="0" y="9" width="4" height="1" fill="#fbfbfb"/><rect x="4" y="9" width="3" height="1" fill="#7d7d7d"/><rect x="7" y="9" width="2" height="1" fill="#fbfbfb"/><rect x="9" y="9" width="6" height="1" fill="#7d7d7d"/><rect x="15" y="9" width="1" height="1" fill="#fbfbfb"/><rect x="0" y="10" width="1" height="1" fill="#fbfbfb"/><rect x="1" y="10" width="5" height="1" fill="#7d7d7d"/><rect x="6" y="10" width="2" height="1" fill="#fbfbfb"/><rect x="8" y="10" width="8" height="1" fill="#7d7d7d"/><rect x="0" y="11" width="5" height="1" fill="#7d7d7d"/><rect x="5" y="11" width="2" height="1" fill="#fbfbfb"/><rect x="7" y="11" width="4" height="1" fill="#7d7d7d"/><rect x="11" y="11" width="2" height="1" fill="#fbfbfb"/><rect x="13" y="11" width="3" height="1" fill="#7d7d7d"/><rect x="0" y="12" width="4" height="1" fill="#7d7d7d"/><rect x="4" y="12" width="3" height="1" fill="#fbfbfb"/><rect x="7" y="12" width="3" height="1" fill="#7d7d7d"/><rect x="10" y="12" width="4" height="1" fill="#fbfbfb"/><rect x="14" y="12" width="2" height="1" fill="#7d7d7d"/><rect x="0" y="13" width="1" height="1" fill="#fbfbfb"/><rect x="1" y="13" width="2" height="1" fill="#7d7d7d"/><rect x="3" y="13" width="3" height="1" fill="#fbfbfb"/><rect x="6" y="13" width="4" height="1" fill="#7d7d7d"/><rect x="10" y="13" width="6" height="1" fill="#fbfbfb"/><rect x="0" y="14" width="6" height="1" fill="#fbfbfb"/><rect x="6" y="14" width="5" height="1" fill="#7d7d7d"/><rect x="11" y="14" width="5" height="1" fill="#fbfbfb"/><rect x="0" y="15" width="7" height="1" fill="#fbfbfb"/><rect x="7" y="15" width="2" height="1" fill="#7d7d7d"/><rect x="9" y="15" width="7" height="1" fill="#fbfbfb"/></svg>
<svg class="a" style="left:394px;top:61px" width="17" height="17" viewBox="0 0 17 17" shape-rendering="crispEdges"><rect x="8" y="0" width="5" height="1" fill="#0000ff"/><rect x="2" y="1" width="1" height="1" fill="#0000ff"/><rect x="5" y="1" width="3" height="1" fill="#0000ff"/><rect x="13" y="1" width="2" height="1" fill="#0000ff"/><rect x="2" y="2" width="4" height="1" fill="#0000ff"/><rect x="14" y="2" width="1" height="1" fill="#0000ff"/><rect x="2" y="3" width="3" height="1" fill="#0000ff"/><rect x="14" y="3" width="1" height="1" fill="#0000ff"/><rect x="2" y="4" width="4" height="1" fill="#0000ff"/><rect x="14" y="4" width="1" height="1" fill="#0000ff"/><rect x="2" y="5" width="5" height="1" fill="#0000ff"/><rect x="13" y="5" width="2" height="1" fill="#0000ff"/><rect x="11" y="6" width="3" height="1" fill="#0000ff"/></svg>
<svg class="a" style="left:417px;top:61px" width="17" height="17" viewBox="0 0 17 17" shape-rendering="crispEdges"><rect x="3" y="0" width="5" height="1" fill="#808080"/><rect x="1" y="1" width="2" height="1" fill="#808080"/><rect x="8" y="1" width="3" height="1" fill="#808080"/><rect x="13" y="1" width="1" height="1" fill="#808080"/><rect x="1" y="2" width="1" height="1" fill="#808080"/><rect x="10" y="2" width="4" height="1" fill="#808080"/><rect x="1" y="3" width="1" height="1" fill="#808080"/><rect x="11" y="3" width="3" height="1" fill="#808080"/><rect x="1" y="4" width="1" height="1" fill="#808080"/><rect x="10" y="4" width="4" height="1" fill="#808080"/><rect x="1" y="5" width="2" height="1" fill="#808080"/><rect x="9" y="5" width="5" height="1" fill="#808080"/><rect x="2" y="6" width="3" height="1" fill="#808080"/></svg>
<svg class="a" style="left:457px;top:57px" width="17" height="17" viewBox="0 0 17 17" shape-rendering="crispEdges"><rect x="1" y="0" width="6" height="1" fill="#000000"/><rect x="1" y="1" width="1" height="1" fill="#000000"/><rect x="2" y="1" width="4" height="1" fill="#ffffff"/><rect x="6" y="1" width="2" height="1" fill="#000000"/><rect x="1" y="2" width="1" height="1" fill="#000000"/><rect x="2" y="2" width="4" height="1" fill="#ffffff"/><rect x="6" y="2" width="1" height="1" fill="#000000"/><rect x="7" y="2" width="1" height="1" fill="#ffffff"/><rect x="8" y="2" width="1" height="1" fill="#000000"/><rect x="1" y="3" width="1" height="1" fill="#000000"/><rect x="2" y="3" width="1" height="1" fill="#ffffff"/><rect x="3" y="3" width="2" height="1" fill="#000000"/><rect x="5" y="3" width="1" height="1" fill="#ffffff"/><rect x="6" y="3" width="2" height="1" fill="#000000"/><rect x="8" y="3" width="6" height="1" fill="#000080"/><rect x="1" y="4" width="1" height="1" fill="#000000"/><rect x="2" y="4" width="5" height="1" fill="#ffffff"/><rect x="7" y="4" width="1" height="1" fill="#000080"/><rect x="8" y="4" width="5" height="1" fill="#ffffff"/><rect x="13" y="4" width="2" height="1" fill="#000080"/><rect x="1" y="5" width="1" height="1" fill="#000000"/><rect x="2" y="5" width="1" height="1" fill="#ffffff"/><rect x="3" y="5" width="4" height="1" fill="#000000"/><rect x="7" y="5" width="1" height="1" fill="#000080"/><rect x="8" y="5" width="1" height="1" fill="#ffffff"/><rect x="9" y="5" width="2" height="1" fill="#000000"/><rect x="11" y="5" width="2" height="1" fill="#ffffff"/><rect x="13" y="5" width="1" height="1" fill="#000080"/><rect x="14" y="5" width="1" height="1" fill="#ffffff"/><rect x="15" y="5" width="1" height="1" fill="#000080"/><rect x="1" y="6" width="1" height="1" fill="#000000"/><rect x="2" y="6" width="5" height="1" fill="#ffffff"/><rect x="7" y="6" width="1" height="1" fill="#000080"/><rect x="8" y="6" width="5" height="1" fill="#ffffff"/><rect x="13" y="6" width="3" height="1" fill="#000080"/><rect x="1" y="7" width="1" height="1" fill="#000000"/><rect x="2" y="7" width="1" height="1" fill="#ffffff"/><rect x="3" y="7" width="4" height="1" fill="#000000"/><rect x="7" y="7" width="1" height="1" fill="#000080"/><rect x="8" y="7" width="1" height="1" fill="#ffffff"/><rect x="9" y="7" width="5" height="1" fill="#000000"/><rect x="14" y="7" width="1" height="1" fill="#ffffff"/><rect x="15" y="7" width="1" height="1" fill="#000080"/><rect x="1" y="8" width="1" height="1" fill="#000000"/><rect x="2" y="8" width="5" height="1" fill="#ffffff"/><rect x="7" y="8" width="1" height="1" fill="#000080"/><rect x="8" y="8" width="7" height="1" fill="#ffffff"/><rect x="15" y="8" width="1" height="1" fill="#000080"/><rect x="1" y="9" width="6" height="1" fill="#000000"/><rect x="7" y="9" width="1" height="1" fill="#000080"/><rect x="8" y="9" width="1" height="1" fill="#ffffff"/><rect x="9" y="9" width="5" height="1" fill="#000000"/><rect x="14" y="9" width="1" height="1" fill="#ffffff"/><rect x="15" y="9" width="1" height="1" fill="#000080"/><rect x="7" y="10" width="1" height="1" fill="#000080"/><rect x="8" y="10" width="7" height="1" fill="#ffffff"/><rect x="15" y="10" width="1" height="1" fill="#000080"/><rect x="7" y="11" width="1" height="1" fill="#000080"/><rect x="8" y="11" width="7" height="1" fill="#ffffff"/><rect x="15" y="11" width="1" height="1" fill="#000080"/><rect x="7" y="12" width="9" height="1" fill="#000080"/></svg>
<svg class="a" style="left:497px;top:57px" width="17" height="17" viewBox="0 0 17 17" shape-rendering="crispEdges"><rect x="2" y="1" width="1" height="1" fill="#000000"/><rect x="1" y="2" width="14" height="1" fill="#000000"/><rect x="2" y="3" width="1" height="1" fill="#000000"/><rect x="2" y="4" width="1" height="1" fill="#000000"/><rect x="3" y="4" width="3" height="1" fill="#ff0000"/><rect x="13" y="4" width="1" height="1" fill="#ff0000"/><rect x="14" y="4" width="1" height="1" fill="#000000"/><rect x="2" y="5" width="1" height="1" fill="#000000"/><rect x="3" y="5" width="3" height="1" fill="#ff0000"/><rect x="6" y="5" width="1" height="1" fill="#000000"/><rect x="12" y="5" width="1" height="1" fill="#ff0000"/><rect x="13" y="5" width="1" height="1" fill="#000000"/><rect x="2" y="6" width="1" height="1" fill="#000000"/><rect x="5" y="6" width="2" height="1" fill="#ff0000"/><rect x="7" y="6" width="1" height="1" fill="#000000"/><rect x="11" y="6" width="1" height="1" fill="#ff0000"/><rect x="12" y="6" width="1" height="1" fill="#000000"/><rect x="2" y="7" width="1" height="1" fill="#000000"/><rect x="6" y="7" width="2" height="1" fill="#ff0000"/><rect x="8" y="7" width="1" height="1" fill="#000000"/><rect x="10" y="7" width="1" height="1" fill="#ff0000"/><rect x="11" y="7" width="1" height="1" fill="#000000"/><rect x="2" y="8" width="1" height="1" fill="#000000"/><rect x="7" y="8" width="3" height="1" fill="#ff0000"/><rect x="10" y="8" width="1" height="1" fill="#000000"/><rect x="2" y="9" width="1" height="1" fill="#000000"/><rect x="7" y="9" width="2" height="1" fill="#ff0000"/><rect x="9" y="9" width="1" height="1" fill="#000000"/><rect x="2" y="10" width="1" height="1" fill="#000000"/><rect x="6" y="10" width="2" height="1" fill="#ff0000"/><rect x="8" y="10" width="1" height="1" fill="#000000"/><rect x="9" y="10" width="2" height="1" fill="#ff0000"/><rect x="2" y="11" width="1" height="1" fill="#000000"/><rect x="5" y="11" width="2" height="1" fill="#ff0000"/><rect x="7" y="11" width="1" height="1" fill="#000000"/><rect x="10" y="11" width="2" height="1" fill="#ff0000"/><rect x="2" y="12" width="1" height="1" fill="#000000"/><rect x="4" y="12" width="2" height="1" fill="#ff0000"/><rect x="6" y="12" width="1" height="1" fill="#000000"/><rect x="11" y="12" width="2" height="1" fill="#ff0000"/><rect x="2" y="13" width="1" height="1" fill="#000000"/><rect x="3" y="13" width="2" height="1" fill="#ff0000"/><rect x="5" y="13" width="1" height="1" fill="#000000"/><rect x="12" y="13" width="1" height="1" fill="#ff0000"/><rect x="13" y="13" width="1" height="1" fill="#000000"/><rect x="2" y="14" width="2" height="1" fill="#000000"/><rect x="13" y="14" width="1" height="1" fill="#000000"/></svg>
<svg class="a" style="left:520px;top:57px" width="17" height="17" viewBox="0 0 17 17" shape-rendering="crispEdges"><rect x="2" y="1" width="1" height="1" fill="#000000"/><rect x="1" y="2" width="14" height="1" fill="#000000"/><rect x="2" y="3" width="1" height="1" fill="#000000"/><rect x="2" y="4" width="1" height="1" fill="#000000"/><rect x="12" y="4" width="1" height="1" fill="#000000"/><rect x="2" y="5" width="1" height="1" fill="#000000"/><rect x="11" y="5" width="3" height="1" fill="#000000"/><rect x="2" y="6" width="1" height="1" fill="#000000"/><rect x="12" y="6" width="1" height="1" fill="#000000"/><rect x="2" y="7" width="1" height="1" fill="#000000"/><rect x="12" y="7" width="1" height="1" fill="#000000"/><rect x="2" y="8" width="1" height="1" fill="#000000"/><rect x="12" y="8" width="1" height="1" fill="#000000"/><rect x="2" y="9" width="1" height="1" fill="#000000"/><rect x="12" y="9" width="1" height="1" fill="#000000"/><rect x="2" y="10" width="1" height="1" fill="#000000"/><rect x="12" y="10" width="1" height="1" fill="#000000"/><rect x="2" y="11" width="1" height="1" fill="#000000"/><rect x="4" y="11" width="1" height="1" fill="#000000"/><rect x="12" y="11" width="1" height="1" fill="#000000"/><rect x="2" y="12" width="11" height="1" fill="#000000"/><rect x="2" y="13" width="1" height="1" fill="#000000"/><rect x="4" y="13" width="1" height="1" fill="#000000"/><rect x="2" y="14" width="1" height="1" fill="#000000"/></svg>
<svg class="a" style="left:560px;top:57px" width="17" height="17" viewBox="0 0 17 17" shape-rendering="crispEdges"><rect x="2" y="1" width="1" height="1" fill="#000000"/><rect x="1" y="2" width="14" height="1" fill="#000000"/><rect x="2" y="3" width="1" height="1" fill="#000000"/><rect x="2" y="4" width="1" height="1" fill="#000000"/><rect x="2" y="5" width="1" height="1" fill="#000000"/><rect x="8" y="5" width="5" height="1" fill="#8a8a8a"/><rect x="2" y="6" width="1" height="1" fill="#000000"/><rect x="7" y="6" width="7" height="1" fill="#8a8a8a"/><rect x="2" y="7" width="1" height="1" fill="#000000"/><rect x="6" y="7" width="2" height="1" fill="#8a8a8a"/><rect x="8" y="7" width="1" height="1" fill="#e8e8e8"/><rect x="9" y="7" width="1" height="1" fill="#8a8a8a"/><rect x="10" y="7" width="1" height="1" fill="#e8e8e8"/><rect x="11" y="7" width="1" height="1" fill="#8a8a8a"/><rect x="12" y="7" width="1" height="1" fill="#e8e8e8"/><rect x="13" y="7" width="2" height="1" fill="#8a8a8a"/><rect x="2" y="8" width="1" height="1" fill="#000000"/><rect x="6" y="8" width="3" height="1" fill="#8a8a8a"/><rect x="9" y="8" width="1" height="1" fill="#e8e8e8"/><rect x="10" y="8" width="1" height="1" fill="#8a8a8a"/><rect x="11" y="8" width="1" height="1" fill="#e8e8e8"/><rect x="12" y="8" width="1" height="1" fill="#8a8a8a"/><rect x="13" y="8" width="1" height="1" fill="#e8e8e8"/><rect x="14" y="8" width="1" height="1" fill="#8a8a8a"/><rect x="2" y="9" width="1" height="1" fill="#000000"/><rect x="6" y="9" width="2" height="1" fill="#8a8a8a"/><rect x="8" y="9" width="1" height="1" fill="#e8e8e8"/><rect x="9" y="9" width="1" height="1" fill="#8a8a8a"/><rect x="10" y="9" width="1" height="1" fill="#e8e8e8"/><rect x="11" y="9" width="1" height="1" fill="#8a8a8a"/><rect x="12" y="9" width="1" height="1" fill="#e8e8e8"/><rect x="13" y="9" width="2" height="1" fill="#8a8a8a"/><rect x="2" y="10" width="1" height="1" fill="#000000"/><rect x="6" y="10" width="3" height="1" fill="#8a8a8a"/><rect x="9" y="10" width="1" height="1" fill="#e8e8e8"/><rect x="10" y="10" width="1" height="1" fill="#8a8a8a"/><rect x="11" y="10" width="1" height="1" fill="#e8e8e8"/><rect x="12" y="10" width="1" height="1" fill="#8a8a8a"/><rect x="13" y="10" width="1" height="1" fill="#e8e8e8"/><rect x="14" y="10" width="1" height="1" fill="#8a8a8a"/><rect x="2" y="11" width="1" height="1" fill="#000000"/><rect x="6" y="11" width="9" height="1" fill="#8a8a8a"/><rect x="2" y="12" width="1" height="1" fill="#000000"/><rect x="7" y="12" width="7" height="1" fill="#8a8a8a"/><rect x="2" y="13" width="1" height="1" fill="#000000"/><rect x="8" y="13" width="5" height="1" fill="#8a8a8a"/><rect x="2" y="14" width="1" height="1" fill="#000000"/></svg>
<svg class="a" style="left:601px;top:58px" width="17" height="17" viewBox="0 0 17 17" shape-rendering="crispEdges"><rect x="6" y="1" width="4" height="1" fill="#000000"/><rect x="5" y="2" width="1" height="1" fill="#000000"/><rect x="6" y="2" width="4" height="1" fill="#c8c8c8"/><rect x="10" y="2" width="1" height="1" fill="#000000"/><rect x="4" y="3" width="1" height="1" fill="#000000"/><rect x="5" y="3" width="2" height="1" fill="#c8c8c8"/><rect x="7" y="3" width="2" height="1" fill="#000000"/><rect x="9" y="3" width="2" height="1" fill="#c8c8c8"/><rect x="11" y="3" width="1" height="1" fill="#000000"/><rect x="4" y="4" width="1" height="1" fill="#000000"/><rect x="5" y="4" width="1" height="1" fill="#c8c8c8"/><rect x="6" y="4" width="1" height="1" fill="#000000"/><rect x="9" y="4" width="1" height="1" fill="#000000"/><rect x="10" y="4" width="1" height="1" fill="#c8c8c8"/><rect x="11" y="4" width="1" height="1" fill="#000000"/><rect x="4" y="5" width="1" height="1" fill="#000000"/><rect x="5" y="5" width="1" height="1" fill="#c8c8c8"/><rect x="6" y="5" width="1" height="1" fill="#000000"/><rect x="9" y="5" width="1" height="1" fill="#000000"/><rect x="10" y="5" width="1" height="1" fill="#c8c8c8"/><rect x="11" y="5" width="1" height="1" fill="#000000"/><rect x="4" y="6" width="1" height="1" fill="#000000"/><rect x="5" y="6" width="1" height="1" fill="#c8c8c8"/><rect x="6" y="6" width="1" height="1" fill="#000000"/><rect x="9" y="6" width="1" height="1" fill="#000000"/><rect x="10" y="6" width="1" height="1" fill="#c8c8c8"/><rect x="11" y="6" width="1" height="1" fill="#000000"/><rect x="3" y="7" width="10" height="1" fill="#000000"/><rect x="3" y="8" width="1" height="1" fill="#000000"/><rect x="4" y="8" width="8" height="1" fill="#c8c8c8"/><rect x="12" y="8" width="1" height="1" fill="#000000"/><rect x="3" y="9" width="1" height="1" fill="#000000"/><rect x="4" y="9" width="3" height="1" fill="#c8c8c8"/><rect x="7" y="9" width="2" height="1" fill="#000000"/><rect x="9" y="9" width="3" height="1" fill="#c8c8c8"/><rect x="12" y="9" width="1" height="1" fill="#000000"/><rect x="3" y="10" width="1" height="1" fill="#000000"/><rect x="4" y="10" width="4" height="1" fill="#c8c8c8"/><rect x="8" y="10" width="1" height="1" fill="#000000"/><rect x="9" y="10" width="3" height="1" fill="#c8c8c8"/><rect x="12" y="10" width="1" height="1" fill="#000000"/><rect x="3" y="11" width="1" height="1" fill="#000000"/><rect x="4" y="11" width="4" height="1" fill="#c8c8c8"/><rect x="8" y="11" width="1" height="1" fill="#000000"/><rect x="9" y="11" width="3" height="1" fill="#c8c8c8"/><rect x="12" y="11" width="1" height="1" fill="#000000"/><rect x="3" y="12" width="1" height="1" fill="#000000"/><rect x="4" y="12" width="3" height="1" fill="#c8c8c8"/><rect x="7" y="12" width="2" height="1" fill="#000000"/><rect x="9" y="12" width="3" height="1" fill="#c8c8c8"/><rect x="12" y="12" width="1" height="1" fill="#000000"/><rect x="3" y="13" width="1" height="1" fill="#000000"/><rect x="4" y="13" width="8" height="1" fill="#c8c8c8"/><rect x="12" y="13" width="1" height="1" fill="#000000"/><rect x="3" y="14" width="10" height="1" fill="#000000"/></svg>
<svg class="a" style="left:623px;top:58px" width="17" height="17" viewBox="0 0 17 17" shape-rendering="crispEdges"><rect x="8" y="0" width="1" height="1" fill="#000000"/><rect x="1" y="1" width="3" height="1" fill="#000000"/><rect x="5" y="1" width="1" height="1" fill="#000000"/><rect x="8" y="1" width="1" height="1" fill="#000000"/><rect x="10" y="1" width="1" height="1" fill="#000000"/><rect x="12" y="1" width="3" height="1" fill="#000000"/><rect x="8" y="2" width="1" height="1" fill="#000000"/><rect x="1" y="3" width="15" height="1" fill="#000000"/><rect x="8" y="4" width="1" height="1" fill="#000000"/><rect x="1" y="5" width="8" height="1" fill="#000000"/><rect x="11" y="5" width="1" height="1" fill="#000000"/><rect x="1" y="6" width="14" height="1" fill="#000000"/><rect x="8" y="7" width="1" height="1" fill="#000000"/><rect x="11" y="7" width="1" height="1" fill="#000000"/><rect x="3" y="8" width="6" height="1" fill="#000000"/><rect x="3" y="9" width="6" height="1" fill="#000000"/><rect x="8" y="10" width="1" height="1" fill="#000000"/><rect x="13" y="10" width="1" height="1" fill="#000000"/><rect x="1" y="11" width="14" height="1" fill="#000000"/><rect x="1" y="12" width="8" height="1" fill="#000000"/><rect x="13" y="12" width="1" height="1" fill="#000000"/><rect x="8" y="13" width="1" height="1" fill="#000000"/><rect x="8" y="14" width="1" height="1" fill="#000000"/></svg>
<svg class="a" style="left:646px;top:58px" width="17" height="17" viewBox="0 0 17 17" shape-rendering="crispEdges"><rect x="9" y="2" width="2" height="1" fill="#000000"/><rect x="14" y="2" width="1" height="1" fill="#000000"/><rect x="8" y="3" width="3" height="1" fill="#000000"/><rect x="13" y="3" width="3" height="1" fill="#000000"/><rect x="8" y="4" width="3" height="1" fill="#000000"/><rect x="14" y="4" width="1" height="1" fill="#000000"/><rect x="7" y="5" width="1" height="1" fill="#000000"/><rect x="9" y="5" width="2" height="1" fill="#000000"/><rect x="7" y="6" width="1" height="1" fill="#000000"/><rect x="9" y="6" width="2" height="1" fill="#000000"/><rect x="6" y="7" width="1" height="1" fill="#000000"/><rect x="9" y="7" width="2" height="1" fill="#000000"/><rect x="6" y="8" width="1" height="1" fill="#000000"/><rect x="9" y="8" width="2" height="1" fill="#000000"/><rect x="5" y="9" width="6" height="1" fill="#000000"/><rect x="5" y="10" width="1" height="1" fill="#000000"/><rect x="9" y="10" width="2" height="1" fill="#000000"/><rect x="4" y="11" width="1" height="1" fill="#000000"/><rect x="9" y="11" width="2" height="1" fill="#000000"/><rect x="2" y="12" width="4" height="1" fill="#000000"/><rect x="8" y="12" width="5" height="1" fill="#000000"/></svg>
<svg class="a" style="left:686px;top:57px" width="17" height="17" viewBox="0 0 17 17" shape-rendering="crispEdges"><rect x="0" y="0" width="1" height="1" fill="#d40000"/><rect x="1" y="0" width="1" height="1" fill="#d40000"/><rect x="2" y="0" width="1" height="1" fill="#d40000"/><rect x="3" y="0" width="1" height="1" fill="#d40000"/><rect x="4" y="0" width="1" height="1" fill="#ff4a4a"/><rect x="5" y="0" width="1" height="1" fill="#ff4a4a"/><rect x="6" y="0" width="1" height="1" fill="#ff4a4a"/><rect x="7" y="0" width="1" height="1" fill="#ff4a4a"/><rect x="8" y="0" width="1" height="1" fill="#ffb4b4"/><rect x="9" y="0" width="1" height="1" fill="#ffb4b4"/><rect x="10" y="0" width="1" height="1" fill="#ffb4b4"/><rect x="11" y="0" width="1" height="1" fill="#ffb4b4"/><rect x="12" y="0" width="1" height="1" fill="#ffffff"/><rect x="13" y="0" width="1" height="1" fill="#ffffff"/><rect x="14" y="0" width="1" height="1" fill="#ffffff"/><rect x="15" y="0" width="1" height="1" fill="#ffffff"/><rect x="0" y="1" width="1" height="1" fill="#d40000"/><rect x="1" y="1" width="1" height="1" fill="#d40000"/><rect x="2" y="1" width="1" height="1" fill="#d40000"/><rect x="3" y="1" width="1" height="1" fill="#d40000"/><rect x="4" y="1" width="1" height="1" fill="#ff4a4a"/><rect x="5" y="1" width="1" height="1" fill="#ff4a4a"/><rect x="6" y="1" width="1" height="1" fill="#ff4a4a"/><rect x="7" y="1" width="1" height="1" fill="#ff4a4a"/><rect x="8" y="1" width="1" height="1" fill="#ffb4b4"/><rect x="9" y="1" width="1" height="1" fill="#ffb4b4"/><rect x="10" y="1" width="1" height="1" fill="#ffb4b4"/><rect x="11" y="1" width="1" height="1" fill="#ffb4b4"/><rect x="12" y="1" width="1" height="1" fill="#ffffff"/><rect x="13" y="1" width="1" height="1" fill="#ffffff"/><rect x="14" y="1" width="1" height="1" fill="#ffffff"/><rect x="15" y="1" width="1" height="1" fill="#ffffff"/><rect x="0" y="2" width="1" height="1" fill="#d40000"/><rect x="1" y="2" width="1" height="1" fill="#d40000"/><rect x="2" y="2" width="1" height="1" fill="#ff4a4a"/><rect x="3" y="2" width="1" height="1" fill="#ff4a4a"/><rect x="4" y="2" width="1" height="1" fill="#ff4a4a"/><rect x="5" y="2" width="1" height="1" fill="#ff4a4a"/><rect x="6" y="2" width="1" height="1" fill="#ffb4b4"/><rect x="7" y="2" width="1" height="1" fill="#ffb4b4"/><rect x="8" y="2" width="1" height="1" fill="#ffb4b4"/><rect x="9" y="2" width="1" height="1" fill="#ffb4b4"/><rect x="10" y="2" width="1" height="1" fill="#ffffff"/><rect x="11" y="2" width="1" height="1" fill="#ffffff"/><rect x="12" y="2" width="1" height="1" fill="#ffffff"/><rect x="13" y="2" width="1" height="1" fill="#ffffff"/><rect x="14" y="2" width="1" height="1" fill="#dcdcff"/><rect x="15" y="2" width="1" height="1" fill="#dcdcff"/><rect x="0" y="3" width="1" height="1" fill="#d40000"/><rect x="1" y="3" width="1" height="1" fill="#d40000"/><rect x="2" y="3" width="1" height="1" fill="#ff4a4a"/><rect x="3" y="3" width="1" height="1" fill="#ff4a4a"/><rect x="4" y="3" width="1" height="1" fill="#ff4a4a"/><rect x="5" y="3" width="1" height="1" fill="#ff4a4a"/><rect x="6" y="3" width="1" height="1" fill="#ffb4b4"/><rect x="7" y="3" width="1" height="1" fill="#ffb4b4"/><rect x="8" y="3" width="1" height="1" fill="#ffb4b4"/><rect x="9" y="3" width="1" height="1" fill="#ffb4b4"/><rect x="10" y="3" width="1" height="1" fill="#ffffff"/><rect x="11" y="3" width="1" height="1" fill="#ffffff"/><rect x="12" y="3" width="1" height="1" fill="#ffffff"/><rect x="13" y="3" width="1" height="1" fill="#ffffff"/><rect x="14" y="3" width="1" height="1" fill="#dcdcff"/><rect x="15" y="3" width="1" height="1" fill="#dcdcff"/><rect x="0" y="4" width="1" height="1" fill="#ff4a4a"/><rect x="1" y="4" width="1" height="1" fill="#ff4a4a"/><rect x="2" y="4" width="1" height="1" fill="#ff4a4a"/><rect x="3" y="4" width="1" height="1" fill="#ff4a4a"/><rect x="4" y="4" width="1" height="1" fill="#ffb4b4"/><rect x="5" y="4" width="1" height="1" fill="#ffb4b4"/><rect x="6" y="4" width="1" height="1" fill="#ffb4b4"/><rect x="7" y="4" width="1" height="1" fill="#ffb4b4"/><rect x="8" y="4" width="1" height="1" fill="#ffffff"/><rect x="9" y="4" width="1" height="1" fill="#ffffff"/><rect x="10" y="4" width="1" height="1" fill="#ffffff"/><rect x="11" y="4" width="1" height="1" fill="#ffffff"/><rect x="12" y="4" width="1" height="1" fill="#dcdcff"/><rect x="13" y="4" width="1" height="1" fill="#dcdcff"/><rect x="14" y="4" width="1" height="1" fill="#dcdcff"/><rect x="15" y="4" width="1" height="1" fill="#dcdcff"/><rect x="0" y="5" width="1" height="1" fill="#ff4a4a"/><rect x="1" y="5" width="1" height="1" fill="#ff4a4a"/><rect x="2" y="5" width="1" height="1" fill="#ff4a4a"/><rect x="3" y="5" width="1" height="1" fill="#ff4a4a"/><rect x="4" y="5" width="1" height="1" fill="#ffb4b4"/><rect x="5" y="5" width="1" height="1" fill="#ffb4b4"/><rect x="6" y="5" width="1" height="1" fill="#ffb4b4"/><rect x="7" y="5" width="1" height="1" fill="#ffb4b4"/><rect x="8" y="5" width="1" height="1" fill="#ffffff"/><rect x="9" y="5" width="1" height="1" fill="#ffffff"/><rect x="10" y="5" width="1" height="1" fill="#ffffff"/><rect x="11" y="5" width="1" height="1" fill="#ffffff"/><rect x="12" y="5" width="1" height="1" fill="#dcdcff"/><rect x="13" y="5" width="1" height="1" fill="#dcdcff"/><rect x="14" y="5" width="1" height="1" fill="#dcdcff"/><rect x="15" y="5" width="1" height="1" fill="#dcdcff"/><rect x="0" y="6" width="1" height="1" fill="#ff4a4a"/><rect x="1" y="6" width="1" height="1" fill="#ff4a4a"/><rect x="2" y="6" width="1" height="1" fill="#ffb4b4"/><rect x="3" y="6" width="1" height="1" fill="#ffb4b4"/><rect x="4" y="6" width="1" height="1" fill="#ffb4b4"/><rect x="5" y="6" width="1" height="1" fill="#ffb4b4"/><rect x="6" y="6" width="1" height="1" fill="#ffffff"/><rect x="7" y="6" width="1" height="1" fill="#ffffff"/><rect x="8" y="6" width="1" height="1" fill="#ffffff"/><rect x="9" y="6" width="1" height="1" fill="#ffffff"/><rect x="10" y="6" width="1" height="1" fill="#dcdcff"/><rect x="11" y="6" width="1" height="1" fill="#dcdcff"/><rect x="12" y="6" width="1" height="1" fill="#dcdcff"/><rect x="13" y="6" width="1" height="1" fill="#dcdcff"/><rect x="14" y="6" width="1" height="1" fill="#9090ff"/><rect x="15" y="6" width="1" height="1" fill="#9090ff"/><rect x="0" y="7" width="1" height="1" fill="#ff4a4a"/><rect x="1" y="7" width="1" height="1" fill="#ff4a4a"/><rect x="2" y="7" width="1" height="1" fill="#ffb4b4"/><rect x="3" y="7" width="1" height="1" fill="#ffb4b4"/><rect x="4" y="7" width="1" height="1" fill="#ffb4b4"/><rect x="5" y="7" width="1" height="1" fill="#ffb4b4"/><rect x="6" y="7" width="1" height="1" fill="#ffffff"/><rect x="7" y="7" width="1" height="1" fill="#ffffff"/><rect x="8" y="7" width="1" height="1" fill="#ffffff"/><rect x="9" y="7" width="1" height="1" fill="#ffffff"/><rect x="10" y="7" width="1" height="1" fill="#dcdcff"/><rect x="11" y="7" width="1" height="1" fill="#dcdcff"/><rect x="12" y="7" width="1" height="1" fill="#dcdcff"/><rect x="13" y="7" width="1" height="1" fill="#dcdcff"/><rect x="14" y="7" width="1" height="1" fill="#9090ff"/><rect x="15" y="7" width="1" height="1" fill="#9090ff"/><rect x="0" y="8" width="1" height="1" fill="#ffb4b4"/><rect x="1" y="8" width="1" height="1" fill="#ffb4b4"/><rect x="2" y="8" width="1" height="1" fill="#ffb4b4"/><rect x="3" y="8" width="1" height="1" fill="#ffb4b4"/><rect x="4" y="8" width="1" height="1" fill="#ffffff"/><rect x="5" y="8" width="1" height="1" fill="#ffffff"/><rect x="6" y="8" width="1" height="1" fill="#ffffff"/><rect x="7" y="8" width="1" height="1" fill="#ffffff"/><rect x="8" y="8" width="1" height="1" fill="#dcdcff"/><rect x="9" y="8" width="1" height="1" fill="#dcdcff"/><rect x="10" y="8" width="1" height="1" fill="#dcdcff"/><rect x="11" y="8" width="1" height="1" fill="#dcdcff"/><rect x="12" y="8" width="1" height="1" fill="#9090ff"/><rect x="13" y="8" width="1" height="1" fill="#9090ff"/><rect x="14" y="8" width="1" height="1" fill="#9090ff"/><rect x="15" y="8" width="1" height="1" fill="#9090ff"/><rect x="0" y="9" width="1" height="1" fill="#ffb4b4"/><rect x="1" y="9" width="1" height="1" fill="#ffb4b4"/><rect x="2" y="9" width="1" height="1" fill="#ffb4b4"/><rect x="3" y="9" width="1" height="1" fill="#ffb4b4"/><rect x="4" y="9" width="1" height="1" fill="#ffffff"/><rect x="5" y="9" width="1" height="1" fill="#ffffff"/><rect x="6" y="9" width="1" height="1" fill="#ffffff"/><rect x="7" y="9" width="1" height="1" fill="#ffffff"/><rect x="8" y="9" width="1" height="1" fill="#dcdcff"/><rect x="9" y="9" width="1" height="1" fill="#dcdcff"/><rect x="10" y="9" width="1" height="1" fill="#dcdcff"/><rect x="11" y="9" width="1" height="1" fill="#dcdcff"/><rect x="12" y="9" width="1" height="1" fill="#9090ff"/><rect x="13" y="9" width="1" height="1" fill="#9090ff"/><rect x="14" y="9" width="1" height="1" fill="#9090ff"/><rect x="15" y="9" width="1" height="1" fill="#9090ff"/><rect x="0" y="10" width="1" height="1" fill="#ffb4b4"/><rect x="1" y="10" width="1" height="1" fill="#ffb4b4"/><rect x="2" y="10" width="1" height="1" fill="#ffffff"/><rect x="3" y="10" width="1" height="1" fill="#ffffff"/><rect x="4" y="10" width="1" height="1" fill="#ffffff"/><rect x="5" y="10" width="1" height="1" fill="#ffffff"/><rect x="6" y="10" width="1" height="1" fill="#dcdcff"/><rect x="7" y="10" width="1" height="1" fill="#dcdcff"/><rect x="8" y="10" width="1" height="1" fill="#dcdcff"/><rect x="9" y="10" width="1" height="1" fill="#dcdcff"/><rect x="10" y="10" width="1" height="1" fill="#9090ff"/><rect x="11" y="10" width="1" height="1" fill="#9090ff"/><rect x="12" y="10" width="1" height="1" fill="#9090ff"/><rect x="13" y="10" width="1" height="1" fill="#9090ff"/><rect x="14" y="10" width="1" height="1" fill="#4a4aff"/><rect x="15" y="10" width="1" height="1" fill="#4a4aff"/><rect x="0" y="11" width="1" height="1" fill="#ffb4b4"/><rect x="1" y="11" width="1" height="1" fill="#ffb4b4"/><rect x="2" y="11" width="1" height="1" fill="#ffffff"/><rect x="3" y="11" width="1" height="1" fill="#ffffff"/><rect x="4" y="11" width="1" height="1" fill="#ffffff"/><rect x="5" y="11" width="1" height="1" fill="#ffffff"/><rect x="6" y="11" width="1" height="1" fill="#dcdcff"/><rect x="7" y="11" width="1" height="1" fill="#dcdcff"/><rect x="8" y="11" width="1" height="1" fill="#dcdcff"/><rect x="9" y="11" width="1" height="1" fill="#dcdcff"/><rect x="10" y="11" width="1" height="1" fill="#9090ff"/><rect x="11" y="11" width="1" height="1" fill="#9090ff"/><rect x="12" y="11" width="1" height="1" fill="#9090ff"/><rect x="13" y="11" width="1" height="1" fill="#9090ff"/><rect x="14" y="11" width="1" height="1" fill="#4a4aff"/><rect x="15" y="11" width="1" height="1" fill="#4a4aff"/><rect x="0" y="12" width="1" height="1" fill="#ffffff"/><rect x="1" y="12" width="1" height="1" fill="#ffffff"/><rect x="2" y="12" width="1" height="1" fill="#ffffff"/><rect x="3" y="12" width="1" height="1" fill="#ffffff"/><rect x="4" y="12" width="1" height="1" fill="#dcdcff"/><rect x="5" y="12" width="1" height="1" fill="#dcdcff"/><rect x="6" y="12" width="1" height="1" fill="#dcdcff"/><rect x="7" y="12" width="1" height="1" fill="#dcdcff"/><rect x="8" y="12" width="1" height="1" fill="#9090ff"/><rect x="9" y="12" width="1" height="1" fill="#9090ff"/><rect x="10" y="12" width="1" height="1" fill="#9090ff"/><rect x="11" y="12" width="1" height="1" fill="#9090ff"/><rect x="12" y="12" width="1" height="1" fill="#4a4aff"/><rect x="13" y="12" width="1" height="1" fill="#4a4aff"/><rect x="14" y="12" width="1" height="1" fill="#4a4aff"/><rect x="15" y="12" width="1" height="1" fill="#4a4aff"/><rect x="0" y="13" width="1" height="1" fill="#ffffff"/><rect x="1" y="13" width="1" height="1" fill="#ffffff"/><rect x="2" y="13" width="1" height="1" fill="#ffffff"/><rect x="3" y="13" width="1" height="1" fill="#ffffff"/><rect x="4" y="13" width="1" height="1" fill="#dcdcff"/><rect x="5" y="13" width="1" height="1" fill="#dcdcff"/><rect x="6" y="13" width="1" height="1" fill="#dcdcff"/><rect x="7" y="13" width="1" height="1" fill="#dcdcff"/><rect x="8" y="13" width="1" height="1" fill="#9090ff"/><rect x="9" y="13" width="1" height="1" fill="#9090ff"/><rect x="10" y="13" width="1" height="1" fill="#9090ff"/><rect x="11" y="13" width="1" height="1" fill="#9090ff"/><rect x="12" y="13" width="1" height="1" fill="#4a4aff"/><rect x="13" y="13" width="1" height="1" fill="#4a4aff"/><rect x="14" y="13" width="1" height="1" fill="#4a4aff"/><rect x="15" y="13" width="1" height="1" fill="#4a4aff"/><rect x="0" y="14" width="1" height="1" fill="#ffffff"/><rect x="1" y="14" width="1" height="1" fill="#ffffff"/><rect x="2" y="14" width="1" height="1" fill="#dcdcff"/><rect x="3" y="14" width="1" height="1" fill="#dcdcff"/><rect x="4" y="14" width="1" height="1" fill="#dcdcff"/><rect x="5" y="14" width="1" height="1" fill="#dcdcff"/><rect x="6" y="14" width="1" height="1" fill="#9090ff"/><rect x="7" y="14" width="1" height="1" fill="#9090ff"/><rect x="8" y="14" width="1" height="1" fill="#9090ff"/><rect x="9" y="14" width="1" height="1" fill="#9090ff"/><rect x="10" y="14" width="1" height="1" fill="#4a4aff"/><rect x="11" y="14" width="1" height="1" fill="#4a4aff"/><rect x="12" y="14" width="1" height="1" fill="#4a4aff"/><rect x="13" y="14" width="1" height="1" fill="#4a4aff"/><rect x="14" y="14" width="1" height="1" fill="#0000d0"/><rect x="15" y="14" width="1" height="1" fill="#0000d0"/></svg>
<svg class="a" style="left:726px;top:57px" width="17" height="17" viewBox="0 0 17 17" shape-rendering="crispEdges"><rect x="0" y="0" width="10" height="1" fill="#000000"/><rect x="0" y="1" width="1" height="1" fill="#000000"/><rect x="1" y="1" width="8" height="1" fill="#0000ff"/><rect x="9" y="1" width="1" height="1" fill="#000000"/><rect x="0" y="2" width="1" height="1" fill="#000000"/><rect x="1" y="2" width="8" height="1" fill="#ffffff"/><rect x="9" y="2" width="1" height="1" fill="#000000"/><rect x="0" y="3" width="1" height="1" fill="#000000"/><rect x="1" y="3" width="8" height="1" fill="#ffffff"/><rect x="9" y="3" width="1" height="1" fill="#000000"/><rect x="0" y="4" width="1" height="1" fill="#000000"/><rect x="1" y="4" width="1" height="1" fill="#ffffff"/><rect x="2" y="4" width="6" height="1" fill="#000000"/><rect x="8" y="4" width="1" height="1" fill="#ffffff"/><rect x="9" y="4" width="1" height="1" fill="#000000"/><rect x="0" y="5" width="1" height="1" fill="#000000"/><rect x="1" y="5" width="8" height="1" fill="#ffffff"/><rect x="9" y="5" width="1" height="1" fill="#000000"/><rect x="0" y="6" width="1" height="1" fill="#000000"/><rect x="1" y="6" width="1" height="1" fill="#ffffff"/><rect x="2" y="6" width="4" height="1" fill="#000000"/><rect x="6" y="6" width="3" height="1" fill="#ffffff"/><rect x="9" y="6" width="1" height="1" fill="#000000"/><rect x="0" y="7" width="1" height="1" fill="#000000"/><rect x="1" y="7" width="8" height="1" fill="#ffffff"/><rect x="9" y="7" width="1" height="1" fill="#000000"/><rect x="0" y="8" width="1" height="1" fill="#000000"/><rect x="1" y="8" width="1" height="1" fill="#ffffff"/><rect x="2" y="8" width="5" height="1" fill="#000000"/><rect x="7" y="8" width="2" height="1" fill="#ffffff"/><rect x="9" y="8" width="1" height="1" fill="#000000"/><rect x="0" y="9" width="1" height="1" fill="#000000"/><rect x="1" y="9" width="8" height="1" fill="#ffffff"/><rect x="9" y="9" width="1" height="1" fill="#000000"/><rect x="0" y="10" width="1" height="1" fill="#000000"/><rect x="1" y="10" width="1" height="1" fill="#ffffff"/><rect x="2" y="10" width="6" height="1" fill="#000000"/><rect x="8" y="10" width="1" height="1" fill="#ffffff"/><rect x="9" y="10" width="1" height="1" fill="#000000"/><rect x="13" y="10" width="1" height="1" fill="#000000"/><rect x="0" y="11" width="1" height="1" fill="#000000"/><rect x="1" y="11" width="8" height="1" fill="#ffffff"/><rect x="9" y="11" width="1" height="1" fill="#000000"/><rect x="13" y="11" width="1" height="1" fill="#000000"/><rect x="0" y="12" width="1" height="1" fill="#000000"/><rect x="1" y="12" width="8" height="1" fill="#ffffff"/><rect x="9" y="12" width="1" height="1" fill="#000000"/><rect x="11" y="12" width="5" height="1" fill="#000000"/><rect x="0" y="13" width="10" height="1" fill="#000000"/><rect x="13" y="13" width="1" height="1" fill="#000000"/><rect x="13" y="14" width="1" height="1" fill="#000000"/></svg>
<svg class="a" style="left:766px;top:57px" width="17" height="17" viewBox="0 0 17 17" shape-rendering="crispEdges"><rect x="5" y="0" width="6" height="1" fill="#000000"/><rect x="3" y="1" width="2" height="1" fill="#000000"/><rect x="5" y="1" width="6" height="1" fill="#008000"/><rect x="11" y="1" width="2" height="1" fill="#000000"/><rect x="2" y="2" width="1" height="1" fill="#000000"/><rect x="3" y="2" width="10" height="1" fill="#008000"/><rect x="13" y="2" width="1" height="1" fill="#000000"/><rect x="1" y="3" width="1" height="1" fill="#000000"/><rect x="2" y="3" width="12" height="1" fill="#008000"/><rect x="14" y="3" width="1" height="1" fill="#000000"/><rect x="0" y="4" width="1" height="1" fill="#000000"/><rect x="1" y="4" width="3" height="1" fill="#008000"/><rect x="4" y="4" width="2" height="1" fill="#ffffff"/><rect x="6" y="4" width="3" height="1" fill="#008000"/><rect x="9" y="4" width="2" height="1" fill="#ffffff"/><rect x="11" y="4" width="4" height="1" fill="#008000"/><rect x="15" y="4" width="1" height="1" fill="#000000"/><rect x="0" y="5" width="1" height="1" fill="#000000"/><rect x="1" y="5" width="2" height="1" fill="#008000"/><rect x="3" y="5" width="1" height="1" fill="#ffffff"/><rect x="4" y="5" width="2" height="1" fill="#008000"/><rect x="6" y="5" width="1" height="1" fill="#ffffff"/><rect x="7" y="5" width="1" height="1" fill="#008000"/><rect x="8" y="5" width="1" height="1" fill="#ffffff"/><rect x="9" y="5" width="2" height="1" fill="#008000"/><rect x="11" y="5" width="1" height="1" fill="#ffffff"/><rect x="12" y="5" width="3" height="1" fill="#008000"/><rect x="15" y="5" width="1" height="1" fill="#000000"/><rect x="0" y="6" width="1" height="1" fill="#000000"/><rect x="1" y="6" width="2" height="1" fill="#008000"/><rect x="3" y="6" width="1" height="1" fill="#ffffff"/><rect x="4" y="6" width="4" height="1" fill="#008000"/><rect x="8" y="6" width="1" height="1" fill="#ffffff"/><rect x="9" y="6" width="2" height="1" fill="#008000"/><rect x="11" y="6" width="1" height="1" fill="#ffffff"/><rect x="12" y="6" width="3" height="1" fill="#008000"/><rect x="15" y="6" width="1" height="1" fill="#000000"/><rect x="0" y="7" width="1" height="1" fill="#000000"/><rect x="1" y="7" width="2" height="1" fill="#008000"/><rect x="3" y="7" width="1" height="1" fill="#ffffff"/><rect x="4" y="7" width="1" height="1" fill="#008000"/><rect x="5" y="7" width="2" height="1" fill="#ffffff"/><rect x="7" y="7" width="1" height="1" fill="#008000"/><rect x="8" y="7" width="1" height="1" fill="#ffffff"/><rect x="9" y="7" width="2" height="1" fill="#008000"/><rect x="11" y="7" width="1" height="1" fill="#ffffff"/><rect x="12" y="7" width="3" height="1" fill="#008000"/><rect x="15" y="7" width="1" height="1" fill="#000000"/><rect x="0" y="8" width="1" height="1" fill="#000000"/><rect x="1" y="8" width="2" height="1" fill="#008000"/><rect x="3" y="8" width="1" height="1" fill="#ffffff"/><rect x="4" y="8" width="2" height="1" fill="#008000"/><rect x="6" y="8" width="1" height="1" fill="#ffffff"/><rect x="7" y="8" width="1" height="1" fill="#008000"/><rect x="8" y="8" width="1" height="1" fill="#ffffff"/><rect x="9" y="8" width="2" height="1" fill="#008000"/><rect x="11" y="8" width="1" height="1" fill="#ffffff"/><rect x="12" y="8" width="3" height="1" fill="#008000"/><rect x="15" y="8" width="1" height="1" fill="#000000"/><rect x="0" y="9" width="1" height="1" fill="#000000"/><rect x="1" y="9" width="2" height="1" fill="#008000"/><rect x="3" y="9" width="1" height="1" fill="#ffffff"/><rect x="4" y="9" width="2" height="1" fill="#008000"/><rect x="6" y="9" width="1" height="1" fill="#ffffff"/><rect x="7" y="9" width="1" height="1" fill="#008000"/><rect x="8" y="9" width="1" height="1" fill="#ffffff"/><rect x="9" y="9" width="2" height="1" fill="#008000"/><rect x="11" y="9" width="1" height="1" fill="#ffffff"/><rect x="12" y="9" width="3" height="1" fill="#008000"/><rect x="15" y="9" width="1" height="1" fill="#000000"/><rect x="0" y="10" width="1" height="1" fill="#000000"/><rect x="1" y="10" width="3" height="1" fill="#008000"/><rect x="4" y="10" width="2" height="1" fill="#ffffff"/><rect x="6" y="10" width="3" height="1" fill="#008000"/><rect x="9" y="10" width="2" height="1" fill="#ffffff"/><rect x="11" y="10" width="4" height="1" fill="#008000"/><rect x="15" y="10" width="1" height="1" fill="#000000"/><rect x="1" y="11" width="1" height="1" fill="#000000"/><rect x="2" y="11" width="12" height="1" fill="#008000"/><rect x="14" y="11" width="1" height="1" fill="#000000"/><rect x="2" y="12" width="1" height="1" fill="#000000"/><rect x="3" y="12" width="10" height="1" fill="#008000"/><rect x="13" y="12" width="1" height="1" fill="#000000"/><rect x="3" y="13" width="2" height="1" fill="#000000"/><rect x="5" y="13" width="6" height="1" fill="#008000"/><rect x="11" y="13" width="2" height="1" fill="#000000"/><rect x="5" y="14" width="6" height="1" fill="#000000"/><rect x="6" y="15" width="4" height="1" fill="#000000"/></svg>
<div class="t b tt" style="top:83px;font-size:11.5px">Space-Time Research</div>
<div class="t b tt" style="top:97px;font-size:11px">Retail Banking</div>
<div class="t b tt" style="top:111px;font-size:11.5px">Table 1</div>
<div class="t b tt" style="top:125px;font-size:11.3px">Occupation by Area</div>
<div class="t b tt" style="top:139px;font-size:11.5px">for Customers</div>
<div class="a" style="left:8px;top:158px;width:815px;height:1px;background:#000"></div>
<div class="a" style="left:274px;top:155px;width:1px;height:279px;background:#808080"></div>
<div class="a" style="left:334px;top:158px;width:1px;height:46px;background:#000"></div>
<div class="a" style="left:394px;top:158px;width:1px;height:46px;background:#000"></div>
<div class="a" style="left:463px;top:158px;width:1px;height:46px;background:#000"></div>
<div class="a" style="left:523px;top:158px;width:1px;height:46px;background:#000"></div>
<div class="a" style="left:583px;top:158px;width:1px;height:46px;background:#000"></div>
<div class="a" style="left:643px;top:158px;width:1px;height:46px;background:#000"></div>
<div class="a" style="left:703px;top:158px;width:1px;height:46px;background:#000"></div>
<div class="a" style="left:763px;top:158px;width:1px;height:46px;background:#000"></div>
<div class="a" style="left:8px;top:204px;width:1128px;height:1px;background:#808080"></div>
<div class="a" style="left:8px;top:433px;width:815px;height:1px;background:#000"></div>
<div class="a" style="left:274px;top:204px;width:1px;height:1px;background:#808080"></div>
<div class="hd" style="left:275px;width:59px">New South<br>Wales</div>
<div class="hd" style="left:335px;width:59px">Victoria</div>
<div class="hd" style="left:395px;width:68px">Queensland</div>
<div class="hd" style="left:464px;width:59px">South<br>Australia</div>
<div class="hd" style="left:524px;width:59px">Western<br>Australia</div>
<div class="hd" style="left:584px;width:59px">Tasmania</div>
<div class="hd" style="left:644px;width:59px">Northern<br>Territory</div>
<div class="hd" style="left:704px;width:59px">Australian<br>Capital<br>Territory</div>
<div class="hd" style="left:764px;width:59px">Unknown</div>
<div class="t" style="left:11px;top:209px;letter-spacing:-0.1px">Clerical</div>
<div class="t" style="right:831px;top:209px">1,680</div>
<div class="t" style="right:771px;top:209px">1,246</div>
<div class="t" style="right:702px;top:209px">539</div>
<div class="t" style="right:642px;top:209px">441</div>
<div class="t" style="right:582px;top:209px">294</div>
<div class="t" style="right:522px;top:209px">56</div>
<div class="t" style="right:462px;top:209px">-</div>
<div class="t" style="right:402px;top:209px">35</div>
<div class="t" style="right:342px;top:209px">770</div>
<div class="t" style="left:11px;top:225px;letter-spacing:-0.1px">Executive &amp; Managerial</div>
<div class="t" style="right:831px;top:225px">790</div>
<div class="t" style="right:771px;top:225px">630</div>
<div class="t" style="right:702px;top:225px">343</div>
<div class="t" style="right:642px;top:225px">280</div>
<div class="t" style="right:582px;top:225px">182</div>
<div class="t" style="right:522px;top:225px">14</div>
<div class="t" style="right:462px;top:225px">-</div>
<div class="t" style="right:402px;top:225px">35</div>
<div class="t" style="right:342px;top:225px">385</div>
<div class="t" style="left:11px;top:241px;letter-spacing:-0.1px">Home Duties</div>
<div class="t" style="right:831px;top:241px">6,202</div>
<div class="t" style="right:771px;top:241px">4,606</div>
<div class="t" style="right:702px;top:241px">2,709</div>
<div class="t" style="right:642px;top:241px">2,071</div>
<div class="t" style="right:582px;top:241px">1,526</div>
<div class="t" style="right:522px;top:241px">196</div>
<div class="t" style="right:462px;top:241px">-</div>
<div class="t" style="right:402px;top:241px">168</div>
<div class="t" style="right:342px;top:241px">1,610</div>
<div class="t" style="left:11px;top:257px;letter-spacing:-0.2px">Independent Means; Retired; Pensioner; Unemployed</div>
<div class="t" style="right:831px;top:257px">6,475</div>
<div class="t" style="right:771px;top:257px">5,145</div>
<div class="t" style="right:702px;top:257px">3,325</div>
<div class="t" style="right:642px;top:257px">2,730</div>
<div class="t" style="right:582px;top:257px">1,728</div>
<div class="t" style="right:522px;top:257px">231</div>
<div class="t" style="right:462px;top:257px">-</div>
<div class="t" style="right:402px;top:257px">189</div>
<div class="t" style="right:342px;top:257px">2,905</div>
<div class="t" style="left:11px;top:273px;letter-spacing:-0.1px">Primary production</div>
<div class="t" style="right:831px;top:273px">756</div>
<div class="t" style="right:771px;top:273px">581</div>
<div class="t" style="right:702px;top:273px">280</div>
<div class="t" style="right:642px;top:273px">238</div>
<div class="t" style="right:582px;top:273px">287</div>
<div class="t" style="right:522px;top:273px">35</div>
<div class="t" style="right:462px;top:273px">-</div>
<div class="t" style="right:402px;top:273px">-</div>
<div class="t" style="right:342px;top:273px">266</div>
<div class="t" style="left:11px;top:290px;letter-spacing:-0.1px">Professional</div>
<div class="t" style="right:831px;top:290px">1,988</div>
<div class="t" style="right:771px;top:290px">1,442</div>
<div class="t" style="right:702px;top:290px">1,022</div>
<div class="t" style="right:642px;top:290px">874</div>
<div class="t" style="right:582px;top:290px">497</div>
<div class="t" style="right:522px;top:290px">77</div>
<div class="t" style="right:462px;top:290px">-</div>
<div class="t" style="right:402px;top:290px">35</div>
<div class="t" style="right:342px;top:290px">924</div>
<div class="t" style="left:11px;top:306px;letter-spacing:-0.1px">Sales</div>
<div class="t" style="right:831px;top:306px">1,274</div>
<div class="t" style="right:771px;top:306px">714</div>
<div class="t" style="right:702px;top:306px">497</div>
<div class="t" style="right:642px;top:306px">301</div>
<div class="t" style="right:582px;top:306px">182</div>
<div class="t" style="right:522px;top:306px">35</div>
<div class="t" style="right:462px;top:306px">-</div>
<div class="t" style="right:402px;top:306px">42</div>
<div class="t" style="right:342px;top:306px">679</div>
<div class="t" style="left:11px;top:322px;letter-spacing:-0.1px">Self employed</div>
<div class="t" style="right:831px;top:322px">2,219</div>
<div class="t" style="right:771px;top:322px">1,782</div>
<div class="t" style="right:702px;top:322px">868</div>
<div class="t" style="right:642px;top:322px">812</div>
<div class="t" style="right:582px;top:322px">707</div>
<div class="t" style="right:522px;top:322px">70</div>
<div class="t" style="right:462px;top:322px">-</div>
<div class="t" style="right:402px;top:322px">63</div>
<div class="t" style="right:342px;top:322px">532</div>
<div class="t" style="left:11px;top:338px;letter-spacing:-0.1px">Staff</div>
<div class="t" style="right:831px;top:338px">140</div>
<div class="t" style="right:771px;top:338px">147</div>
<div class="t" style="right:702px;top:338px">42</div>
<div class="t" style="right:642px;top:338px">98</div>
<div class="t" style="right:582px;top:338px">7</div>
<div class="t" style="right:522px;top:338px">7</div>
<div class="t" style="right:462px;top:338px">-</div>
<div class="t" style="right:402px;top:338px">-</div>
<div class="t" style="right:342px;top:338px">14</div>
<div class="t" style="left:11px;top:354px;letter-spacing:-0.1px">Tradesmen</div>
<div class="t" style="right:831px;top:354px">6,167</div>
<div class="t" style="right:771px;top:354px">4,781</div>
<div class="t" style="right:702px;top:354px">2,653</div>
<div class="t" style="right:642px;top:354px">2,127</div>
<div class="t" style="right:582px;top:354px">1,295</div>
<div class="t" style="right:522px;top:354px">203</div>
<div class="t" style="right:462px;top:354px">-</div>
<div class="t" style="right:402px;top:354px">182</div>
<div class="t" style="right:342px;top:354px">2,660</div>
<div class="t" style="left:11px;top:370px;letter-spacing:-0.1px">Transport &amp; Recreation</div>
<div class="t" style="right:831px;top:370px">1,617</div>
<div class="t" style="right:771px;top:370px">1,120</div>
<div class="t" style="right:702px;top:370px">700</div>
<div class="t" style="right:642px;top:370px">532</div>
<div class="t" style="right:582px;top:370px">287</div>
<div class="t" style="right:522px;top:370px">56</div>
<div class="t" style="right:462px;top:370px">-</div>
<div class="t" style="right:402px;top:370px">35</div>
<div class="t" style="right:342px;top:370px">749</div>
<div class="t" style="left:11px;top:386px;letter-spacing:-0.1px">Unemployed</div>
<div class="t" style="right:831px;top:386px">21,079</div>
<div class="t" style="right:771px;top:386px">15,879</div>
<div class="t" style="right:702px;top:386px">9,181</div>
<div class="t" style="right:642px;top:386px">6,841</div>
<div class="t" style="right:582px;top:386px">4,976</div>
<div class="t" style="right:522px;top:386px">847</div>
<div class="t" style="right:462px;top:386px">-</div>
<div class="t" style="right:402px;top:386px">616</div>
<div class="t" style="right:342px;top:386px">548</div>
<div class="t" style="left:11px;top:402px;letter-spacing:-0.1px">Unknown</div>
<div class="t" style="right:831px;top:402px">25,644</div>
<div class="t" style="right:771px;top:402px">17,815</div>
<div class="t" style="right:702px;top:402px">9,905</div>
<div class="t" style="right:642px;top:402px">6,288</div>
<div class="t" style="right:582px;top:402px">4,780</div>
<div class="t" style="right:522px;top:402px">630</div>
<div class="t" style="right:462px;top:402px">-</div>
<div class="t" style="right:402px;top:402px">714</div>
<div class="t" style="right:342px;top:402px">9,086</div>
<div class="t" style="left:11px;top:418px;letter-spacing:-0.1px">Not Applicable</div>
<div class="t" style="right:831px;top:418px">13,330</div>
<div class="t" style="right:771px;top:418px">9,670</div>
<div class="t" style="right:702px;top:418px">5,425</div>
<div class="t" style="right:642px;top:418px">4,175</div>
<div class="t" style="right:582px;top:418px">2,940</div>
<div class="t" style="right:522px;top:418px">399</div>
<div class="t" style="right:462px;top:418px">-</div>
<div class="t" style="right:402px;top:418px">273</div>
<div class="t" style="right:342px;top:418px">2,917</div>
<!-- main scroll areas -->
<div class="a sb" style="left:1136px;top:82px;width:19px;height:583px"></div>
<div class="a" style="left:1136px;top:205px;width:19px;height:460px;background:linear-gradient(90deg,#e6e6e6 0,#f0f0f0 3px,#f0f0f0 16px,#e9e9e9 19px)"></div>
<svg class="a" style="left:1136px;top:205px" width="19" height="460" viewBox="0 0 19 460">
 <path d="M7 10H14L10.5 6Z" fill="#3c3c3c"/>
 <path d="M7 450H14L10.5 453.5Z" fill="#3c3c3c"/>
</svg>
<div class="a thumbv" style="left:1137px;top:222px;width:17px;height:15px"></div>
<div class="a sb" style="left:9px;top:664px;width:265px;height:18px;border-left:1px solid #fff"></div>
<div class="a" style="left:8px;top:82px;width:1px;height:600px;background:#606060"></div>
<div class="a" style="left:274px;top:665px;width:862px;height:17px;background:linear-gradient(180deg,#e6e6e6 0,#f0f0f0 3px,#f0f0f0 14px,#e9e9e9 17px)"></div>
<svg class="a" style="left:274px;top:665px" width="862" height="17" viewBox="0 0 862 17">
 <path d="M10 5V12L6 8.5Z" fill="#3c3c3c"/>
 <path d="M853 5V12L857 8.5Z" fill="#3c3c3c"/>
</svg>
<div class="a thumbh" style="left:292px;top:665px;width:15px;height:17px"></div>
<div class="a sb" style="left:1136px;top:665px;width:19px;height:17px"></div>
<div class="a" style="left:8px;top:682px;width:1147px;height:1px;background:#6a6a6a"></div>
<div class="a sb" style="left:8px;top:683px;width:1147px;height:20px;border-left:1px solid #fff"></div>
<div id="fw" class="a"></div>
<svg class="a" style="left:863px;top:110px" width="16" height="13" viewBox="0 0 16 13" shape-rendering="crispEdges"><rect x="0" y="0" width="1" height="1" fill="#7a7a7a"/><rect x="1" y="0" width="14" height="1" fill="#000080"/><rect x="15" y="0" width="1" height="1" fill="#7a7a7a"/><rect x="0" y="1" width="1" height="1" fill="#7a7a7a"/><rect x="1" y="1" width="14" height="1" fill="#0000ff"/><rect x="15" y="1" width="1" height="1" fill="#7a7a7a"/><rect x="0" y="2" width="1" height="1" fill="#7a7a7a"/><rect x="1" y="2" width="14" height="1" fill="#0000ff"/><rect x="15" y="2" width="1" height="1" fill="#7a7a7a"/><rect x="0" y="3" width="1" height="1" fill="#7a7a7a"/><rect x="1" y="3" width="14" height="1" fill="#ffffff"/><rect x="15" y="3" width="1" height="1" fill="#7a7a7a"/><rect x="0" y="4" width="1" height="1" fill="#7a7a7a"/><rect x="1" y="4" width="10" height="1" fill="#000000"/><rect x="11" y="4" width="1" height="1" fill="#ffffff"/><rect x="12" y="4" width="4" height="1" fill="#7a7a7a"/><rect x="0" y="5" width="1" height="1" fill="#7a7a7a"/><rect x="1" y="5" width="1" height="1" fill="#000000"/><rect x="2" y="5" width="1" height="1" fill="#e0e0e0"/><rect x="3" y="5" width="1" height="1" fill="#b8b8b8"/><rect x="4" y="5" width="1" height="1" fill="#e0e0e0"/><rect x="5" y="5" width="1" height="1" fill="#b8b8b8"/><rect x="6" y="5" width="1" height="1" fill="#e0e0e0"/><rect x="7" y="5" width="1" height="1" fill="#b8b8b8"/><rect x="8" y="5" width="1" height="1" fill="#e0e0e0"/><rect x="9" y="5" width="1" height="1" fill="#b8b8b8"/><rect x="10" y="5" width="1" height="1" fill="#000000"/><rect x="11" y="5" width="1" height="1" fill="#ffffff"/><rect x="12" y="5" width="3" height="1" fill="#b8b8b8"/><rect x="15" y="5" width="1" height="1" fill="#7a7a7a"/><rect x="0" y="6" width="1" height="1" fill="#7a7a7a"/><rect x="1" y="6" width="1" height="1" fill="#000000"/><rect x="2" y="6" width="1" height="1" fill="#b8b8b8"/><rect x="3" y="6" width="1" height="1" fill="#e0e0e0"/><rect x="4" y="6" width="1" height="1" fill="#b8b8b8"/><rect x="5" y="6" width="1" height="1" fill="#e0e0e0"/><rect x="6" y="6" width="1" height="1" fill="#b8b8b8"/><rect x="7" y="6" width="1" height="1" fill="#e0e0e0"/><rect x="8" y="6" width="1" height="1" fill="#b8b8b8"/><rect x="9" y="6" width="1" height="1" fill="#e0e0e0"/><rect x="10" y="6" width="1" height="1" fill="#000000"/><rect x="11" y="6" width="1" height="1" fill="#ffffff"/><rect x="12" y="6" width="3" height="1" fill="#b8b8b8"/><rect x="15" y="6" width="1" height="1" fill="#7a7a7a"/><rect x="0" y="7" width="1" height="1" fill="#7a7a7a"/><rect x="1" y="7" width="1" height="1" fill="#000000"/><rect x="2" y="7" width="1" height="1" fill="#e0e0e0"/><rect x="3" y="7" width="1" height="1" fill="#b8b8b8"/><rect x="4" y="7" width="1" height="1" fill="#e0e0e0"/><rect x="5" y="7" width="1" height="1" fill="#ffffff"/><rect x="6" y="7" width="1" height="1" fill="#e0e0e0"/><rect x="7" y="7" width="1" height="1" fill="#b8b8b8"/><rect x="8" y="7" width="1" height="1" fill="#e0e0e0"/><rect x="9" y="7" width="1" height="1" fill="#b8b8b8"/><rect x="10" y="7" width="1" height="1" fill="#000000"/><rect x="11" y="7" width="1" height="1" fill="#ffffff"/><rect x="12" y="7" width="4" height="1" fill="#7a7a7a"/><rect x="0" y="8" width="1" height="1" fill="#7a7a7a"/><rect x="1" y="8" width="1" height="1" fill="#000000"/><rect x="2" y="8" width="1" height="1" fill="#b8b8b8"/><rect x="3" y="8" width="1" height="1" fill="#e0e0e0"/><rect x="4" y="8" width="1" height="1" fill="#b8b8b8"/><rect x="5" y="8" width="1" height="1" fill="#e0e0e0"/><rect x="6" y="8" width="1" height="1" fill="#b8b8b8"/><rect x="7" y="8" width="1" height="1" fill="#ffffff"/><rect x="8" y="8" width="1" height="1" fill="#b8b8b8"/><rect x="9" y="8" width="1" height="1" fill="#e0e0e0"/><rect x="10" y="8" width="1" height="1" fill="#000000"/><rect x="11" y="8" width="1" height="1" fill="#ffffff"/><rect x="12" y="8" width="3" height="1" fill="#b8b8b8"/><rect x="15" y="8" width="1" height="1" fill="#7a7a7a"/><rect x="0" y="9" width="1" height="1" fill="#7a7a7a"/><rect x="1" y="9" width="1" height="1" fill="#000000"/><rect x="2" y="9" width="1" height="1" fill="#e0e0e0"/><rect x="3" y="9" width="1" height="1" fill="#b8b8b8"/><rect x="4" y="9" width="1" height="1" fill="#e0e0e0"/><rect x="5" y="9" width="1" height="1" fill="#b8b8b8"/><rect x="6" y="9" width="1" height="1" fill="#e0e0e0"/><rect x="7" y="9" width="1" height="1" fill="#b8b8b8"/><rect x="8" y="9" width="1" height="1" fill="#e0e0e0"/><rect x="9" y="9" width="1" height="1" fill="#b8b8b8"/><rect x="10" y="9" width="1" height="1" fill="#000000"/><rect x="11" y="9" width="1" height="1" fill="#ffffff"/><rect x="12" y="9" width="3" height="1" fill="#b8b8b8"/><rect x="15" y="9" width="1" height="1" fill="#7a7a7a"/><rect x="0" y="10" width="1" height="1" fill="#7a7a7a"/><rect x="1" y="10" width="10" height="1" fill="#000000"/><rect x="11" y="10" width="1" height="1" fill="#ffffff"/><rect x="12" y="10" width="4" height="1" fill="#7a7a7a"/><rect x="0" y="11" width="1" height="1" fill="#7a7a7a"/><rect x="1" y="11" width="14" height="1" fill="#ffffff"/><rect x="15" y="11" width="1" height="1" fill="#7a7a7a"/><rect x="0" y="12" width="16" height="1" fill="#7a7a7a"/></svg>
<div class="a" style="left:884px;top:109px;font-size:12px;white-space:nowrap">Fields</div>
<div class="a" style="left:1012px;top:102px;width:103px;height:19px;border:1px solid #8e8e8e;border-top:none;border-radius:0 0 4px 4px;background:linear-gradient(#fdfdfd,#f3f3f3)"></div>
<div class="a" style="left:1040px;top:102px;width:1px;height:18px;background:#a8a8a8"></div>
<div class="a" style="left:1067px;top:102px;width:1px;height:18px;background:#a8a8a8"></div>
<svg class="a" style="left:1012px;top:102px" width="103" height="19" viewBox="0 0 103 19">
 <rect x="9.5" y="9.5" width="11" height="4" rx="1" fill="#fff" stroke="#4a5263"/>
 <rect x="35.5" y="4.5" width="11" height="9" rx="1" fill="none" stroke="#c9c9c9"/>
 <rect x="38.5" y="7.5" width="5" height="3" fill="none" stroke="#c9c9c9"/>
 <path d="M73.5 4.5H77L79 7L81 4.5H84.5L81 9L84.5 13.5H81L79 11L77 13.5H73.5L77 9Z" fill="#fff" stroke="#4a5263" stroke-linejoin="round"/>
</svg>
<div class="a" style="left:862px;top:131px;width:253px;height:518px;border:1px solid #8c8c8c;background:#f0f0f0;box-shadow:1px 1px 0 #fff"></div>
<div class="a" style="left:874px;top:143px;font-size:11px;white-space:nowrap">Name:</div>
<div class="a" style="left:875px;top:157px;width:228px;height:367px;border-top:2px solid #8a8a8a;border-left:1px solid #6f6f6f;border-right:1px solid #fff;border-bottom:1px solid #fff;background:#fff;overflow:hidden">
<div class="a" style="left:0px;top:0;width:210px;height:348px;overflow:hidden">
<div class="li" style="top:0px;left:12px">Summation Options</div>
<div class="li" style="top:14px;left:12px">Customers</div>
<svg class="a" style="left:0px;top:19px" width="9" height="6" viewBox="0 0 9 6"><path d="M0 0H9L4.5 5Z" fill="#000"/></svg>
<div class="li" style="top:28px;left:24px">Age</div>
<div class="li" style="top:42px;left:24px">Age Groups</div>
<div class="li" style="top:56px;left:24px">Gender</div>
<div class="li" style="top:70px;left:24px">Marital Status</div>
<div class="li" style="top:84px;left:24px;font-weight:bold">Occupation</div>
<div class="a" style="left:0;top:98px;width:209px;height:14px;background:#3399ff"></div>
<div class="a" style="left:12px;top:98px;width:197px;height:14px;border:1px dotted #000"></div>
<div class="li" style="top:98px;left:24px;color:#fff;font-weight:bold">Area</div>
<div class="li" style="top:112px;left:24px">Customer Mail Indicator</div>
<div class="li" style="top:126px;left:24px">Individual &#92; Company</div>
<div class="li" style="top:140px;left:24px">Customer Open Calendar Date</div>
<div class="li" style="top:154px;left:24px">Customer Open Financial Date</div>
<div class="li" style="top:168px;left:24px">Customer Open Quarter</div>
<div class="li" style="top:182px;left:24px">Customer Open Month</div>
<div class="li" style="top:196px;left:24px">Customer Open Week</div>
<div class="li" style="top:210px;left:24px">Customer Open Day of Month</div>
<div class="li" style="top:224px;left:24px">Customer Open Day of Week</div>
<div class="li" style="top:238px;left:12px">Accounts</div>
<svg class="a" style="left:0px;top:243px" width="9" height="6" viewBox="0 0 9 6"><path d="M0 0H9L4.5 5Z" fill="#000"/></svg>
<div class="li" style="top:252px;left:24px">Product Type</div>
<div class="li" style="top:266px;left:24px">Account Open Calendar Date</div>
<div class="li" style="top:280px;left:24px">Account Open Financial Date</div>
<div class="li" style="top:294px;left:24px">Account Open Quarter</div>
<div class="li" style="top:308px;left:24px">Account Open Month</div>
<div class="li" style="top:322px;left:24px">Account Open Week</div>
<div class="li" style="top:336px;left:24px">Account Open Day of Month</div>
</div>
<div class="a" style="left:210px;top:0;width:17px;height:348px;background:linear-gradient(90deg,#e9e9e9 0,#f0f0f0 3px,#f0f0f0 14px,#e8e8e8 17px)"></div>
<svg class="a" style="left:210px;top:0" width="17" height="348" viewBox="0 0 17 348"><path d="M5 11H12L8.5 7Z" fill="#3c3c3c"/><path d="M5 338H12L8.5 342Z" fill="#3c3c3c"/></svg>
<div class="a thumbv" style="left:210px;top:18px;width:15px;height:15px"></div>
<div class="a" style="left:0px;top:348px;width:210px;height:17px;background:linear-gradient(180deg,#e8e8e8 0,#f0f0f0 3px,#f0f0f0 14px,#e8e8e8 17px)"></div>
<svg class="a" style="left:0px;top:348px" width="210" height="17" viewBox="0 0 210 17"><path d="M10 4V11L6 7.5Z" fill="#a0a0a0"/><path d="M199 4V11L203 7.5Z" fill="#a0a0a0"/></svg>
<div class="a" style="left:210px;top:348px;width:17px;height:17px;background:#f0f0f0"></div>
</div>
<div class="a" style="left:875px;top:529px;width:13px;height:13px;border:1px solid #8f8f8f;background:linear-gradient(135deg,#dcdcdc,#fafafa);box-shadow:inset 0 0 0 1px #f4f4f4"></div>
<div class="a" style="left:890px;top:530px;font-size:11px;white-space:nowrap;letter-spacing:-0.1px">Add Total With Default Recodes</div>
<div class="fbtn" style="left:875px;top:550px">Recode</div>
<div class="fbtn" style="left:1005px;top:550px">Delete</div>
<div class="fbtn" style="left:875px;top:583px">Add</div>
<div class="fbtn" style="left:1005px;top:583px">Remove</div>
<div class="fbtn" style="left:875px;top:615px">Load</div>
<div class="fbtn" style="left:1005px;top:615px">Save</div>
<svg class="a" style="left:497px;top:536px" width="14" height="21" viewBox="0 0 14 21"><path d="M1.5 1.5V17.8L5.1 14.2L7.9 20L10.1 19L7.5 13.2H12.8Z" fill="#fff" stroke="#1c1c2c" stroke-width="1" stroke-linejoin="round"/></svg>
</body></html>
